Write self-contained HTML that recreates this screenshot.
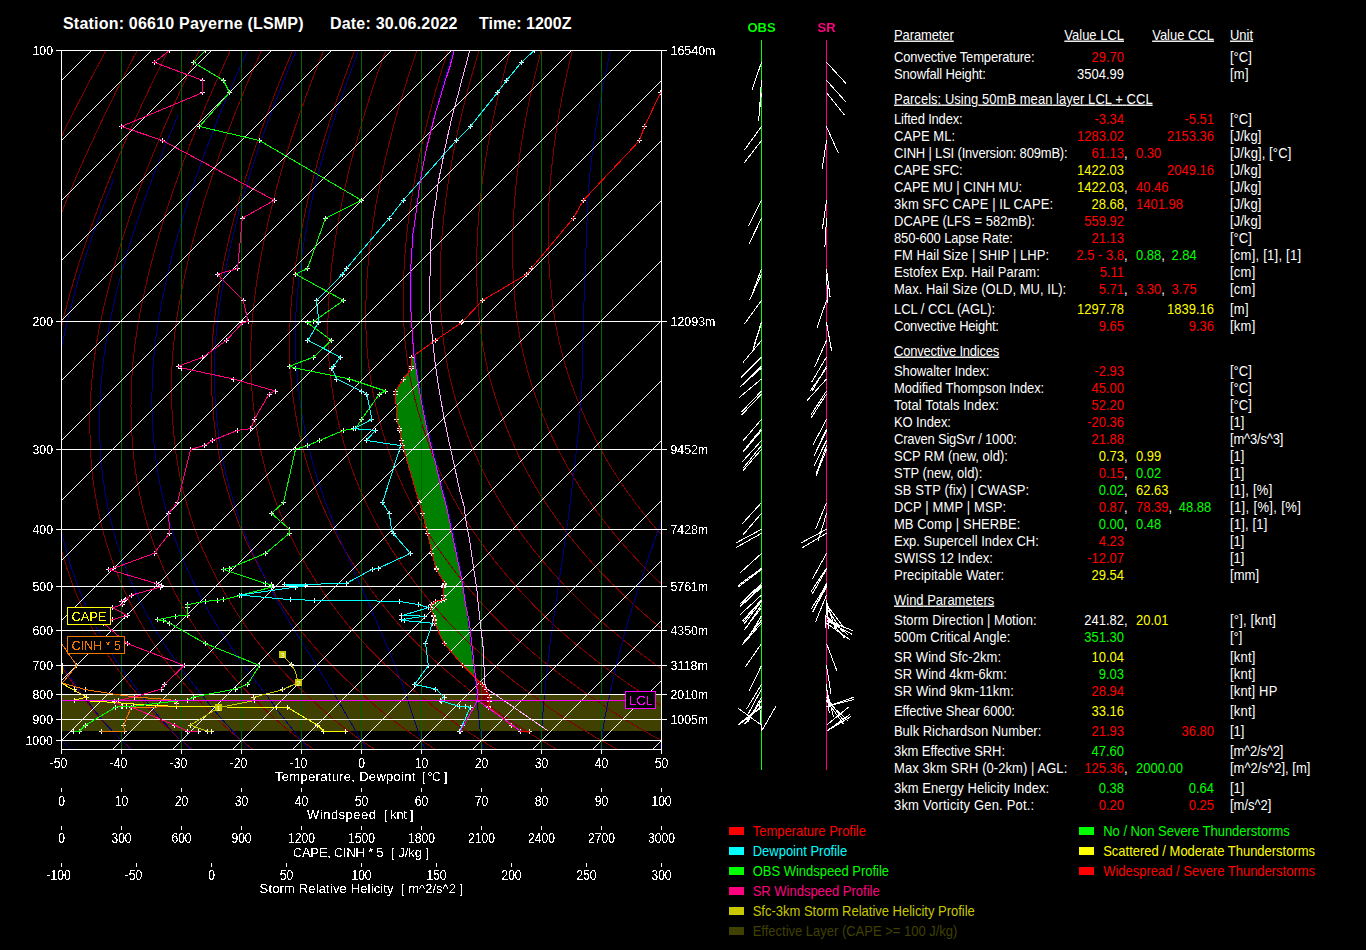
<!DOCTYPE html>
<html lang="en"><head><meta charset="utf-8"><title>Sounding 06610 Payerne</title>
<style>html,body{margin:0;padding:0;background:#000;overflow:hidden}svg{display:block}text{font-family:"Liberation Sans",Arial,sans-serif;font-size:13px;fill:#fff;white-space:pre}</style></head><body>
<svg width="1366" height="950" viewBox="0 0 1366 950">
<rect width="1366" height="950" fill="#000"/>
<g shape-rendering="crispEdges" fill="none" stroke-width="1">
<clipPath id="cp"><rect x="61" y="50" width="601" height="700"/></clipPath>
<g clip-path="url(#cp)">
<rect x="61" y="694" width="600" height="37" fill="#404000" stroke="none"/>
<polygon fill="#008000" stroke="none" points="411.8,357.1 411.8,366.2 411.8,368.0 403.2,379.0 395.6,391.0 395.6,394.0 396.6,419.4 399.6,428.6 399.9,430.4 401.2,440.5 402.3,445.5 403.7,449.3 419.2,502.6 422.6,513.3 426.3,529.3 427.7,533.3 431.9,553.4 436.0,568.2 436.4,569.4 444.7,583.4 444.0,584.9 443.6,585.9 443.6,587.2 443.6,595.0 444.3,599.7 441.0,600.2 435.5,601.3 431.4,604.6 430.3,607.6 433.6,615.6 433.8,616.1 434.8,619.8 434.8,620.6 434.8,623.2 444.1,643.6 462.9,665.5 478.6,681.0 476.0,681.0 475.2,674.3 472.7,652.4 469.3,622.1 465.5,604.1 463.0,586.4 459.7,569.6 455.4,549.4 451.2,528.9 446.2,505.6 440.3,483.7 435.2,461.8 432.3,451.5 428.1,434.7 424.2,416.2 420.5,397.7 418.0,380.8 414.1,357.2 414.1,357.1"/>
<polygon fill="#800000" stroke="none" points="476.0,681.0 476.9,687.7 477.7,700.4 484.0,705.0 488.7,706.6 488.7,706.3 489.5,701.1 489.5,700.4 489.5,697.0 486.2,689.0 482.0,684.4 478.6,681.0"/>
<path stroke="#800000" d="M106.1,50.5 94.6,71.7 84.1,91.6 74.5,110.4 65.6,128.1 57.5,144.8 49.9,160.7 43.0,175.7 36.5,190.1 30.6,203.7 25.0,216.8 19.9,229.2 15.1,241.2 10.6,252.6 6.5,263.6 2.7,274.2 -0.9,284.4 -4.3,294.1 -7.4,303.6 -10.3,312.7 -13.0,321.5 -15.5,330.0 -17.8,338.2 -19.9,346.0 -21.8,353.6 -23.6,361.0 -25.2,368.1 -26.7,375.0 -28.0,381.7 -29.2,388.2 -30.3,394.5 -31.4,400.6 -32.3,406.6 -33.1,412.4 -33.9,418.1 -34.6,423.6 -35.2,429.0 -35.8,434.3 -36.3,439.5 -36.8,444.5 -37.2,449.5 -37.5,454.4 -37.8,459.1 -38.1,463.7 -38.3,468.2 -38.4,472.6 -38.5,477.0 -38.5,481.2 -38.5,485.3 -38.4,489.4 -38.3,493.4 -38.2,497.3 -38.1,501.1 -37.9,504.9 -37.7,508.6 -37.4,512.2 -37.2,515.8 -36.9,519.3 -36.6,522.8 -36.2,526.2 -35.9,529.5 -35.5,532.8 -35.1,536.0 -34.7,539.2 -34.2,542.3 -33.8,545.4 -33.3,548.4 -32.8,551.4 -32.3,554.3 -31.7,557.2 -31.2,560.1 -30.6,562.9 -30.0,565.6 -29.5,568.4 -28.9,571.1 -28.2,573.7 -27.6,576.3 -27.0,578.9 -26.3,581.5 -25.7,584.0 -25.0,586.5 -24.4,589.0 -23.7,591.4 -23.0,593.8 -22.3,596.2 -21.6,598.5 -20.9,600.8 -20.2,603.1 -19.5,605.4 -18.8,607.6 -18.0,609.8 -17.3,612.0 -16.6,614.2 -15.8,616.3 -15.0,618.4 -14.3,620.5 -13.5,622.5 -12.7,624.6 -11.9,626.6 -11.1,628.5 -10.3,630.5 -9.5,632.4 -8.7,634.3 -7.9,636.2 -7.0,638.1 -6.2,640.0 -5.4,641.8 -4.5,643.6 -3.7,645.4 -2.8,647.2 -1.9,648.9 -1.1,650.6 -0.2,652.3 0.6,654.0 1.5,655.7 2.4,657.4 3.3,659.0 4.1,660.7 5.0,662.3 5.9,663.9 6.8,665.5 7.7,667.1 8.6,668.6 9.4,670.2 10.3,671.7 11.2,673.2 12.1,674.7 13.0,676.2 13.9,677.7 14.8,679.2 15.8,680.6 16.7,682.0 17.6,683.5 18.5,684.9 19.4,686.3 20.3,687.7 21.2,689.1 22.1,690.4 23.0,691.8 23.9,693.2 24.8,694.5 25.7,695.8 26.6,697.2 27.5,698.5 28.4,699.8 29.3,701.1 30.2,702.4 31.1,703.7 32.0,705.0 32.9,706.2 33.7,707.5 34.6,708.8 35.5,710.0 36.4,711.2 37.3,712.4 38.2,713.6 39.1,714.8 40.1,716.0 41.0,717.2 41.9,718.4 42.8,719.5 43.7,720.6 44.6,721.8 45.6,722.9 46.5,724.0 47.4,725.1 48.4,726.2 49.3,727.3 50.2,728.3 51.1,729.4 52.1,730.4 53.0,731.5 54.0,732.5 54.9,733.5 55.8,734.6 56.8,735.6 57.7,736.6 58.7,737.6 59.6,738.6 60.6,739.5 61.5,740.5 62.4,741.5 63.4,742.4 64.3,743.4 65.3,744.3 66.2,745.2 67.2,746.2 68.1,747.1 69.1,748.0 70.1,748.9 71.0,749.8 72.0,750.7 72.9,751.6M137.2,50.5 126.1,71.7 116.0,91.6 106.8,110.4 98.4,128.1 90.6,144.8 83.4,160.7 76.8,175.7 70.7,190.1 65.1,203.7 59.9,216.8 55.1,229.2 50.6,241.2 46.5,252.6 42.7,263.6 39.1,274.2 35.8,284.4 32.8,294.1 29.9,303.6 27.3,312.7 24.9,321.5 22.6,330.0 20.6,338.2 18.8,346.0 17.1,353.6 15.6,361.0 14.2,368.1 13.0,375.0 11.9,381.7 10.9,388.2 10.0,394.5 9.2,400.6 8.5,406.6 7.9,412.4 7.4,418.1 6.9,423.6 6.5,429.0 6.1,434.3 5.8,439.5 5.6,444.5 5.3,449.5 5.2,454.4 5.1,459.1 5.1,463.7 5.1,468.2 5.1,472.6 5.3,477.0 5.4,481.2 5.6,485.3 5.8,489.4 6.1,493.4 6.4,497.3 6.7,501.1 7.1,504.9 7.5,508.6 7.9,512.2 8.4,515.8 8.8,519.3 9.3,522.8 9.8,526.2 10.3,529.5 10.8,532.8 11.4,536.0 12.0,539.2 12.6,542.3 13.2,545.4 13.8,548.4 14.5,551.4 15.2,554.3 15.9,557.2 16.6,560.1 17.3,562.9 18.0,565.6 18.8,568.4 19.5,571.1 20.3,573.7 21.0,576.3 21.8,578.9 22.6,581.5 23.4,584.0 24.2,586.5 25.0,589.0 25.8,591.4 26.6,593.8 27.4,596.2 28.3,598.5 29.1,600.8 30.0,603.1 30.8,605.4 31.7,607.6 32.5,609.8 33.4,612.0 34.3,614.2 35.2,616.3 36.1,618.4 37.0,620.5 37.9,622.5 38.8,624.6 39.7,626.6 40.6,628.5 41.5,630.5 42.5,632.4 43.4,634.3 44.4,636.2 45.3,638.1 46.3,640.0 47.2,641.8 48.2,643.6 49.2,645.4 50.1,647.2 51.1,648.9 52.1,650.6 53.1,652.3 54.0,654.0 55.0,655.7 56.0,657.4 57.0,659.0 58.0,660.7 59.0,662.3 60.0,663.9 61.0,665.5 62.0,667.1 63.0,668.6 64.0,670.2 65.0,671.7 66.0,673.2 67.0,674.7 68.0,676.2 69.0,677.7 70.0,679.2 71.0,680.6 72.0,682.0 73.0,683.5 74.1,684.9 75.1,686.3 76.1,687.7 77.1,689.1 78.1,690.4 79.1,691.8 80.1,693.2 81.1,694.5 82.1,695.8 83.1,697.2 84.1,698.5 85.1,699.8 86.1,701.1 87.1,702.4 88.1,703.7 89.0,705.0 90.0,706.2 91.0,707.5 92.0,708.8 93.0,710.0 94.0,711.2 95.0,712.4 96.0,713.6 97.0,714.8 98.0,716.0 99.0,717.2 100.0,718.4 101.0,719.5 102.0,720.6 103.0,721.8 104.1,722.9 105.1,724.0 106.1,725.1 107.1,726.2 108.1,727.3 109.2,728.3 110.2,729.4 111.2,730.4 112.2,731.5 113.3,732.5 114.3,733.5 115.3,734.6 116.3,735.6 117.4,736.6 118.4,737.6 119.4,738.6 120.5,739.5 121.5,740.5 122.5,741.5 123.6,742.4 124.6,743.4 125.6,744.3 126.7,745.2 127.7,746.2 128.7,747.1 129.8,748.0 130.8,748.9 131.8,749.8 132.9,750.7 133.9,751.6M168.3,50.5 157.6,71.7 148.0,91.6 139.2,110.4 131.1,128.1 123.7,144.8 116.9,160.7 110.7,175.7 105.0,190.1 99.7,203.7 94.8,216.8 90.3,229.2 86.2,241.2 82.4,252.6 78.8,263.6 75.6,274.2 72.6,284.4 69.8,294.1 67.3,303.6 64.9,312.7 62.7,321.5 60.8,330.0 59.0,338.2 57.4,346.0 56.0,353.6 54.8,361.0 53.7,368.1 52.7,375.0 51.8,381.7 51.1,388.2 50.4,394.5 49.8,400.6 49.4,406.6 49.0,412.4 48.6,418.1 48.4,423.6 48.2,429.0 48.0,434.3 47.9,439.5 47.9,444.5 47.9,449.5 47.9,454.4 48.0,459.1 48.2,463.7 48.4,468.2 48.7,472.6 49.0,477.0 49.3,481.2 49.7,485.3 50.1,489.4 50.6,493.4 51.0,497.3 51.6,501.1 52.1,504.9 52.7,508.6 53.3,512.2 53.9,515.8 54.5,519.3 55.1,522.8 55.8,526.2 56.5,529.5 57.2,532.8 57.9,536.0 58.6,539.2 59.4,542.3 60.2,545.4 61.0,548.4 61.8,551.4 62.6,554.3 63.5,557.2 64.3,560.1 65.2,562.9 66.1,565.6 67.0,568.4 67.9,571.1 68.8,573.7 69.7,576.3 70.6,578.9 71.5,581.5 72.5,584.0 73.4,586.5 74.3,589.0 75.3,591.4 76.2,593.8 77.2,596.2 78.2,598.5 79.2,600.8 80.1,603.1 81.1,605.4 82.1,607.6 83.1,609.8 84.1,612.0 85.1,614.2 86.1,616.3 87.2,618.4 88.2,620.5 89.2,622.5 90.3,624.6 91.3,626.6 92.3,628.5 93.4,630.5 94.4,632.4 95.5,634.3 96.6,636.2 97.6,638.1 98.7,640.0 99.8,641.8 100.9,643.6 102.0,645.4 103.1,647.2 104.2,648.9 105.2,650.6 106.3,652.3 107.4,654.0 108.5,655.7 109.6,657.4 110.7,659.0 111.8,660.7 113.0,662.3 114.1,663.9 115.2,665.5 116.3,667.1 117.4,668.6 118.5,670.2 119.6,671.7 120.7,673.2 121.8,674.7 122.9,676.2 124.1,677.7 125.2,679.2 126.3,680.6 127.4,682.0 128.5,683.5 129.6,684.9 130.7,686.3 131.9,687.7 133.0,689.1 134.1,690.4 135.2,691.8 136.3,693.2 137.4,694.5 138.5,695.8 139.6,697.2 140.7,698.5 141.8,699.8 142.9,701.1 144.0,702.4 145.0,703.7 146.1,705.0 147.2,706.2 148.3,707.5 149.4,708.8 150.5,710.0 151.6,711.2 152.7,712.4 153.7,713.6 154.8,714.8 155.9,716.0 157.0,717.2 158.1,718.4 159.2,719.5 160.3,720.6 161.5,721.8 162.6,722.9 163.7,724.0 164.8,725.1 165.9,726.2 167.0,727.3 168.1,728.3 169.2,729.4 170.3,730.4 171.5,731.5 172.6,732.5 173.7,733.5 174.8,734.6 175.9,735.6 177.0,736.6 178.1,737.6 179.3,738.6 180.4,739.5 181.5,740.5 182.6,741.5 183.7,742.4 184.9,743.4 186.0,744.3 187.1,745.2 188.2,746.2 189.3,747.1 190.5,748.0 191.6,748.9 192.7,749.8 193.8,750.7 194.9,751.6M199.3,50.5 189.2,71.7 179.9,91.6 171.5,110.4 163.8,128.1 156.8,144.8 150.4,160.7 144.5,175.7 139.2,190.1 134.2,203.7 129.7,216.8 125.5,229.2 121.7,241.2 118.2,252.6 115.0,263.6 112.0,274.2 109.3,284.4 106.9,294.1 104.6,303.6 102.5,312.7 100.6,321.5 98.9,330.0 97.4,338.2 96.1,346.0 95.0,353.6 94.0,361.0 93.1,368.1 92.4,375.0 91.7,381.7 91.2,388.2 90.8,394.5 90.5,400.6 90.2,406.6 90.0,412.4 89.9,418.1 89.9,423.6 89.9,429.0 90.0,434.3 90.1,439.5 90.2,444.5 90.4,449.5 90.7,454.4 91.0,459.1 91.3,463.7 91.7,468.2 92.2,472.6 92.7,477.0 93.2,481.2 93.8,485.3 94.4,489.4 95.0,493.4 95.7,497.3 96.4,501.1 97.1,504.9 97.8,508.6 98.6,512.2 99.4,515.8 100.2,519.3 101.0,522.8 101.8,526.2 102.7,529.5 103.5,532.8 104.4,536.0 105.3,539.2 106.2,542.3 107.2,545.4 108.1,548.4 109.1,551.4 110.1,554.3 111.1,557.2 112.1,560.1 113.1,562.9 114.1,565.6 115.2,568.4 116.2,571.1 117.3,573.7 118.3,576.3 119.4,578.9 120.5,581.5 121.5,584.0 122.6,586.5 123.7,589.0 124.8,591.4 125.9,593.8 127.0,596.2 128.1,598.5 129.2,600.8 130.3,603.1 131.4,605.4 132.6,607.6 133.7,609.8 134.8,612.0 136.0,614.2 137.1,616.3 138.3,618.4 139.4,620.5 140.6,622.5 141.7,624.6 142.9,626.6 144.1,628.5 145.2,630.5 146.4,632.4 147.6,634.3 148.8,636.2 150.0,638.1 151.2,640.0 152.4,641.8 153.6,643.6 154.8,645.4 156.0,647.2 157.2,648.9 158.4,650.6 159.6,652.3 160.8,654.0 162.1,655.7 163.3,657.4 164.5,659.0 165.7,660.7 166.9,662.3 168.1,663.9 169.3,665.5 170.6,667.1 171.8,668.6 173.0,670.2 174.2,671.7 175.4,673.2 176.7,674.7 177.9,676.2 179.1,677.7 180.3,679.2 181.5,680.6 182.8,682.0 184.0,683.5 185.2,684.9 186.4,686.3 187.6,687.7 188.9,689.1 190.1,690.4 191.3,691.8 192.5,693.2 193.7,694.5 194.9,695.8 196.1,697.2 197.3,698.5 198.5,699.8 199.7,701.1 200.8,702.4 202.0,703.7 203.2,705.0 204.4,706.2 205.6,707.5 206.8,708.8 207.9,710.0 209.1,711.2 210.3,712.4 211.5,713.6 212.7,714.8 213.9,716.0 215.1,717.2 216.3,718.4 217.5,719.5 218.7,720.6 219.9,721.8 221.1,722.9 222.3,724.0 223.5,725.1 224.7,726.2 225.9,727.3 227.1,728.3 228.3,729.4 229.5,730.4 230.7,731.5 231.9,732.5 233.1,733.5 234.3,734.6 235.5,735.6 236.7,736.6 237.9,737.6 239.1,738.6 240.3,739.5 241.5,740.5 242.7,741.5 243.9,742.4 245.1,743.4 246.3,744.3 247.5,745.2 248.7,746.2 249.9,747.1 251.1,748.0 252.3,748.9 253.5,749.8 254.7,750.7 255.9,751.6M230.4,50.5 220.7,71.7 211.9,91.6 203.8,110.4 196.6,128.1 189.9,144.8 183.9,160.7 178.4,175.7 173.4,190.1 168.8,203.7 164.6,216.8 160.8,229.2 157.3,241.2 154.1,252.6 151.2,263.6 148.5,274.2 146.1,284.4 143.9,294.1 141.9,303.6 140.1,312.7 138.5,321.5 137.1,330.0 135.9,338.2 134.8,346.0 133.9,353.6 133.1,361.0 132.5,368.1 132.0,375.0 131.6,381.7 131.4,388.2 131.2,394.5 131.1,400.6 131.0,406.6 131.1,412.4 131.2,418.1 131.4,423.6 131.6,429.0 131.9,434.3 132.2,439.5 132.6,444.5 133.0,449.5 133.4,454.4 133.9,459.1 134.5,463.7 135.1,468.2 135.7,472.6 136.4,477.0 137.1,481.2 137.9,485.3 138.7,489.4 139.5,493.4 140.3,497.3 141.2,501.1 142.1,504.9 143.0,508.6 143.9,512.2 144.9,515.8 145.8,519.3 146.8,522.8 147.8,526.2 148.8,529.5 149.9,532.8 150.9,536.0 152.0,539.2 153.1,542.3 154.2,545.4 155.3,548.4 156.4,551.4 157.5,554.3 158.7,557.2 159.9,560.1 161.0,562.9 162.2,565.6 163.4,568.4 164.6,571.1 165.8,573.7 167.0,576.3 168.2,578.9 169.4,581.5 170.6,584.0 171.8,586.5 173.1,589.0 174.3,591.4 175.5,593.8 176.8,596.2 178.0,598.5 179.2,600.8 180.5,603.1 181.8,605.4 183.0,607.6 184.3,609.8 185.5,612.0 186.8,614.2 188.1,616.3 189.4,618.4 190.6,620.5 191.9,622.5 193.2,624.6 194.5,626.6 195.8,628.5 197.1,630.5 198.4,632.4 199.7,634.3 201.0,636.2 202.3,638.1 203.6,640.0 205.0,641.8 206.3,643.6 207.6,645.4 208.9,647.2 210.3,648.9 211.6,650.6 212.9,652.3 214.2,654.0 215.6,655.7 216.9,657.4 218.2,659.0 219.6,660.7 220.9,662.3 222.2,663.9 223.5,665.5 224.9,667.1 226.2,668.6 227.5,670.2 228.8,671.7 230.2,673.2 231.5,674.7 232.8,676.2 234.2,677.7 235.5,679.2 236.8,680.6 238.1,682.0 239.5,683.5 240.8,684.9 242.1,686.3 243.4,687.7 244.7,689.1 246.1,690.4 247.4,691.8 248.7,693.2 250.0,694.5 251.3,695.8 252.6,697.2 253.9,698.5 255.2,699.8 256.5,701.1 257.7,702.4 259.0,703.7 260.3,705.0 261.6,706.2 262.9,707.5 264.1,708.8 265.4,710.0 266.7,711.2 268.0,712.4 269.3,713.6 270.5,714.8 271.8,716.0 273.1,717.2 274.4,718.4 275.7,719.5 277.0,720.6 278.3,721.8 279.6,722.9 280.8,724.0 282.1,725.1 283.4,726.2 284.7,727.3 286.0,728.3 287.3,729.4 288.6,730.4 289.9,731.5 291.2,732.5 292.5,733.5 293.8,734.6 295.0,735.6 296.3,736.6 297.6,737.6 298.9,738.6 300.2,739.5 301.5,740.5 302.8,741.5 304.1,742.4 305.4,743.4 306.7,744.3 307.9,745.2 309.2,746.2 310.5,747.1 311.8,748.0 313.1,748.9 314.4,749.8 315.7,750.7 316.9,751.6M261.5,50.5 252.2,71.7 243.8,91.6 236.2,110.4 229.3,128.1 223.1,144.8 217.4,160.7 212.3,175.7 207.6,190.1 203.3,203.7 199.5,216.8 196.0,229.2 192.8,241.2 189.9,252.6 187.3,263.6 185.0,274.2 182.9,284.4 181.0,294.1 179.3,303.6 177.7,312.7 176.4,321.5 175.2,330.0 174.3,338.2 173.5,346.0 172.8,353.6 172.3,361.0 171.9,368.1 171.7,375.0 171.5,381.7 171.5,388.2 171.5,394.5 171.7,400.6 171.9,406.6 172.1,412.4 172.5,418.1 172.9,423.6 173.3,429.0 173.8,434.3 174.3,439.5 174.9,444.5 175.5,449.5 176.1,454.4 176.8,459.1 177.6,463.7 178.4,468.2 179.2,472.6 180.1,477.0 181.0,481.2 181.9,485.3 182.9,489.4 183.9,493.4 184.9,497.3 186.0,501.1 187.1,504.9 188.2,508.6 189.3,512.2 190.4,515.8 191.5,519.3 192.7,522.8 193.8,526.2 195.0,529.5 196.2,532.8 197.4,536.0 198.7,539.2 199.9,542.3 201.2,545.4 202.4,548.4 203.7,551.4 205.0,554.3 206.3,557.2 207.6,560.1 208.9,562.9 210.3,565.6 211.6,568.4 212.9,571.1 214.3,573.7 215.6,576.3 217.0,578.9 218.3,581.5 219.7,584.0 221.1,586.5 222.4,589.0 223.8,591.4 225.2,593.8 226.5,596.2 227.9,598.5 229.3,600.8 230.7,603.1 232.1,605.4 233.5,607.6 234.8,609.8 236.2,612.0 237.6,614.2 239.0,616.3 240.5,618.4 241.9,620.5 243.3,622.5 244.7,624.6 246.1,626.6 247.5,628.5 248.9,630.5 250.4,632.4 251.8,634.3 253.2,636.2 254.7,638.1 256.1,640.0 257.5,641.8 259.0,643.6 260.4,645.4 261.9,647.2 263.3,648.9 264.8,650.6 266.2,652.3 267.6,654.0 269.1,655.7 270.5,657.4 272.0,659.0 273.4,660.7 274.8,662.3 276.3,663.9 277.7,665.5 279.2,667.1 280.6,668.6 282.0,670.2 283.5,671.7 284.9,673.2 286.3,674.7 287.8,676.2 289.2,677.7 290.6,679.2 292.1,680.6 293.5,682.0 294.9,683.5 296.4,684.9 297.8,686.3 299.2,687.7 300.6,689.1 302.0,690.4 303.5,691.8 304.9,693.2 306.3,694.5 307.7,695.8 309.1,697.2 310.5,698.5 311.9,699.8 313.2,701.1 314.6,702.4 316.0,703.7 317.4,705.0 318.8,706.2 320.1,707.5 321.5,708.8 322.9,710.0 324.3,711.2 325.6,712.4 327.0,713.6 328.4,714.8 329.8,716.0 331.1,717.2 332.5,718.4 333.9,719.5 335.3,720.6 336.7,721.8 338.0,722.9 339.4,724.0 340.8,725.1 342.2,726.2 343.6,727.3 345.0,728.3 346.3,729.4 347.7,730.4 349.1,731.5 350.5,732.5 351.9,733.5 353.2,734.6 354.6,735.6 356.0,736.6 357.4,737.6 358.7,738.6 360.1,739.5 361.5,740.5 362.9,741.5 364.2,742.4 365.6,743.4 367.0,744.3 368.4,745.2 369.7,746.2 371.1,747.1 372.5,748.0 373.8,748.9 375.2,749.8 376.6,750.7 377.9,751.6M292.6,50.5 283.7,71.7 275.7,91.6 268.5,110.4 262.1,128.1 256.2,144.8 250.9,160.7 246.1,175.7 241.8,190.1 237.9,203.7 234.4,216.8 231.2,229.2 228.4,241.2 225.8,252.6 223.5,263.6 221.4,274.2 219.6,284.4 218.0,294.1 216.6,303.6 215.4,312.7 214.3,321.5 213.4,330.0 212.7,338.2 212.1,346.0 211.8,353.6 211.5,361.0 211.4,368.1 211.4,375.0 211.5,381.7 211.6,388.2 211.9,394.5 212.3,400.6 212.7,406.6 213.2,412.4 213.7,418.1 214.4,423.6 215.0,429.0 215.7,434.3 216.4,439.5 217.2,444.5 218.0,449.5 218.9,454.4 219.8,459.1 220.7,463.7 221.7,468.2 222.7,472.6 223.8,477.0 224.9,481.2 226.0,485.3 227.2,489.4 228.4,493.4 229.6,497.3 230.8,501.1 232.1,504.9 233.3,508.6 234.6,512.2 235.9,515.8 237.2,519.3 238.5,522.8 239.9,526.2 241.2,529.5 242.6,532.8 243.9,536.0 245.3,539.2 246.7,542.3 248.1,545.4 249.6,548.4 251.0,551.4 252.5,554.3 253.9,557.2 255.4,560.1 256.8,562.9 258.3,565.6 259.8,568.4 261.3,571.1 262.8,573.7 264.3,576.3 265.8,578.9 267.3,581.5 268.8,584.0 270.3,586.5 271.8,589.0 273.3,591.4 274.8,593.8 276.3,596.2 277.8,598.5 279.3,600.8 280.9,603.1 282.4,605.4 283.9,607.6 285.4,609.8 287.0,612.0 288.5,614.2 290.0,616.3 291.6,618.4 293.1,620.5 294.6,622.5 296.2,624.6 297.7,626.6 299.3,628.5 300.8,630.5 302.4,632.4 303.9,634.3 305.5,636.2 307.0,638.1 308.6,640.0 310.1,641.8 311.7,643.6 313.2,645.4 314.8,647.2 316.4,648.9 317.9,650.6 319.5,652.3 321.0,654.0 322.6,655.7 324.2,657.4 325.7,659.0 327.3,660.7 328.8,662.3 330.4,663.9 331.9,665.5 333.5,667.1 335.0,668.6 336.5,670.2 338.1,671.7 339.6,673.2 341.2,674.7 342.7,676.2 344.3,677.7 345.8,679.2 347.3,680.6 348.9,682.0 350.4,683.5 351.9,684.9 353.5,686.3 355.0,687.7 356.5,689.1 358.0,690.4 359.6,691.8 361.1,693.2 362.6,694.5 364.1,695.8 365.6,697.2 367.1,698.5 368.6,699.8 370.0,701.1 371.5,702.4 373.0,703.7 374.5,705.0 375.9,706.2 377.4,707.5 378.9,708.8 380.4,710.0 381.8,711.2 383.3,712.4 384.8,713.6 386.2,714.8 387.7,716.0 389.2,717.2 390.6,718.4 392.1,719.5 393.6,720.6 395.1,721.8 396.5,722.9 398.0,724.0 399.5,725.1 401.0,726.2 402.4,727.3 403.9,728.3 405.4,729.4 406.8,730.4 408.3,731.5 409.8,732.5 411.3,733.5 412.7,734.6 414.2,735.6 415.6,736.6 417.1,737.6 418.6,738.6 420.0,739.5 421.5,740.5 423.0,741.5 424.4,742.4 425.9,743.4 427.3,744.3 428.8,745.2 430.2,746.2 431.7,747.1 433.2,748.0 434.6,748.9 436.1,749.8 437.5,750.7 439.0,751.6M323.6,50.5 315.2,71.7 307.7,91.6 300.9,110.4 294.8,128.1 289.3,144.8 284.4,160.7 280.0,175.7 276.0,190.1 272.5,203.7 269.3,216.8 266.4,229.2 263.9,241.2 261.7,252.6 259.7,263.6 257.9,274.2 256.4,284.4 255.1,294.1 253.9,303.6 253.0,312.7 252.2,321.5 251.5,330.0 251.1,338.2 250.8,346.0 250.7,353.6 250.7,361.0 250.8,368.1 251.0,375.0 251.4,381.7 251.8,388.2 252.3,394.5 252.9,400.6 253.5,406.6 254.2,412.4 255.0,418.1 255.8,423.6 256.7,429.0 257.6,434.3 258.6,439.5 259.6,444.5 260.6,449.5 261.6,454.4 262.7,459.1 263.9,463.7 265.0,468.2 266.3,472.6 267.5,477.0 268.8,481.2 270.1,485.3 271.5,489.4 272.8,493.4 274.2,497.3 275.6,501.1 277.0,504.9 278.5,508.6 279.9,512.2 281.4,515.8 282.9,519.3 284.4,522.8 285.9,526.2 287.4,529.5 288.9,532.8 290.4,536.0 292.0,539.2 293.6,542.3 295.1,545.4 296.7,548.4 298.3,551.4 299.9,554.3 301.5,557.2 303.1,560.1 304.8,562.9 306.4,565.6 308.0,568.4 309.7,571.1 311.3,573.7 312.9,576.3 314.6,578.9 316.2,581.5 317.9,584.0 319.5,586.5 321.1,589.0 322.8,591.4 324.4,593.8 326.1,596.2 327.7,598.5 329.4,600.8 331.0,603.1 332.7,605.4 334.4,607.6 336.0,609.8 337.7,612.0 339.3,614.2 341.0,616.3 342.7,618.4 344.3,620.5 346.0,622.5 347.6,624.6 349.3,626.6 351.0,628.5 352.7,630.5 354.3,632.4 356.0,634.3 357.7,636.2 359.4,638.1 361.0,640.0 362.7,641.8 364.4,643.6 366.1,645.4 367.7,647.2 369.4,648.9 371.1,650.6 372.8,652.3 374.4,654.0 376.1,655.7 377.8,657.4 379.4,659.0 381.1,660.7 382.8,662.3 384.4,663.9 386.1,665.5 387.8,667.1 389.4,668.6 391.1,670.2 392.7,671.7 394.4,673.2 396.0,674.7 397.7,676.2 399.3,677.7 401.0,679.2 402.6,680.6 404.3,682.0 405.9,683.5 407.5,684.9 409.2,686.3 410.8,687.7 412.4,689.1 414.0,690.4 415.6,691.8 417.3,693.2 418.9,694.5 420.5,695.8 422.1,697.2 423.7,698.5 425.2,699.8 426.8,701.1 428.4,702.4 430.0,703.7 431.6,705.0 433.1,706.2 434.7,707.5 436.3,708.8 437.8,710.0 439.4,711.2 441.0,712.4 442.5,713.6 444.1,714.8 445.6,716.0 447.2,717.2 448.8,718.4 450.3,719.5 451.9,720.6 453.5,721.8 455.0,722.9 456.6,724.0 458.2,725.1 459.7,726.2 461.3,727.3 462.9,728.3 464.4,729.4 466.0,730.4 467.5,731.5 469.1,732.5 470.6,733.5 472.2,734.6 473.8,735.6 475.3,736.6 476.9,737.6 478.4,738.6 480.0,739.5 481.5,740.5 483.0,741.5 484.6,742.4 486.1,743.4 487.7,744.3 489.2,745.2 490.8,746.2 492.3,747.1 493.8,748.0 495.4,748.9 496.9,749.8 498.4,750.7 500.0,751.6M354.7,50.5 346.7,71.7 339.6,91.6 333.2,110.4 327.5,128.1 322.4,144.8 317.9,160.7 313.8,175.7 310.2,190.1 307.0,203.7 304.2,216.8 301.7,229.2 299.4,241.2 297.5,252.6 295.8,263.6 294.4,274.2 293.1,284.4 292.1,294.1 291.3,303.6 290.6,312.7 290.1,321.5 289.7,330.0 289.5,338.2 289.5,346.0 289.6,353.6 289.9,361.0 290.2,368.1 290.7,375.0 291.3,381.7 291.9,388.2 292.7,394.5 293.5,400.6 294.4,406.6 295.3,412.4 296.3,418.1 297.3,423.6 298.4,429.0 299.5,434.3 300.7,439.5 301.9,444.5 303.1,449.5 304.4,454.4 305.7,459.1 307.0,463.7 308.4,468.2 309.8,472.6 311.2,477.0 312.7,481.2 314.2,485.3 315.7,489.4 317.3,493.4 318.8,497.3 320.4,501.1 322.0,504.9 323.6,508.6 325.3,512.2 326.9,515.8 328.6,519.3 330.2,522.8 331.9,526.2 333.6,529.5 335.3,532.8 336.9,536.0 338.7,539.2 340.4,542.3 342.1,545.4 343.9,548.4 345.6,551.4 347.4,554.3 349.1,557.2 350.9,560.1 352.7,562.9 354.4,565.6 356.2,568.4 358.0,571.1 359.8,573.7 361.6,576.3 363.4,578.9 365.2,581.5 366.9,584.0 368.7,586.5 370.5,589.0 372.3,591.4 374.1,593.8 375.9,596.2 377.6,598.5 379.4,600.8 381.2,603.1 383.0,605.4 384.8,607.6 386.6,609.8 388.4,612.0 390.2,614.2 392.0,616.3 393.7,618.4 395.5,620.5 397.3,622.5 399.1,624.6 400.9,626.6 402.7,628.5 404.5,630.5 406.3,632.4 408.1,634.3 409.9,636.2 411.7,638.1 413.5,640.0 415.3,641.8 417.1,643.6 418.9,645.4 420.7,647.2 422.5,648.9 424.3,650.6 426.0,652.3 427.8,654.0 429.6,655.7 431.4,657.4 433.2,659.0 435.0,660.7 436.7,662.3 438.5,663.9 440.3,665.5 442.0,667.1 443.8,668.6 445.6,670.2 447.3,671.7 449.1,673.2 450.9,674.7 452.6,676.2 454.4,677.7 456.1,679.2 457.9,680.6 459.6,682.0 461.4,683.5 463.1,684.9 464.8,686.3 466.6,687.7 468.3,689.1 470.0,690.4 471.7,691.8 473.5,693.2 475.2,694.5 476.9,695.8 478.6,697.2 480.3,698.5 481.9,699.8 483.6,701.1 485.3,702.4 487.0,703.7 488.6,705.0 490.3,706.2 492.0,707.5 493.6,708.8 495.3,710.0 497.0,711.2 498.6,712.4 500.3,713.6 501.9,714.8 503.6,716.0 505.2,717.2 506.9,718.4 508.6,719.5 510.2,720.6 511.9,721.8 513.5,722.9 515.2,724.0 516.8,725.1 518.5,726.2 520.2,727.3 521.8,728.3 523.5,729.4 525.1,730.4 526.7,731.5 528.4,732.5 530.0,733.5 531.7,734.6 533.3,735.6 535.0,736.6 536.6,737.6 538.2,738.6 539.9,739.5 541.5,740.5 543.1,741.5 544.8,742.4 546.4,743.4 548.0,744.3 549.6,745.2 551.3,746.2 552.9,747.1 554.5,748.0 556.1,748.9 557.7,749.8 559.4,750.7 561.0,751.6M385.8,50.5 378.2,71.7 371.5,91.6 365.6,110.4 360.3,128.1 355.6,144.8 351.4,160.7 347.7,175.7 344.4,190.1 341.6,203.7 339.1,216.8 336.9,229.2 335.0,241.2 333.4,252.6 332.0,263.6 330.8,274.2 329.9,284.4 329.2,294.1 328.6,303.6 328.2,312.7 327.9,321.5 327.8,330.0 327.9,338.2 328.2,346.0 328.5,353.6 329.0,361.0 329.7,368.1 330.4,375.0 331.2,381.7 332.1,388.2 333.1,394.5 334.1,400.6 335.2,406.6 336.4,412.4 337.6,418.1 338.8,423.6 340.1,429.0 341.5,434.3 342.8,439.5 344.2,444.5 345.6,449.5 347.1,454.4 348.6,459.1 350.1,463.7 351.7,468.2 353.3,472.6 354.9,477.0 356.6,481.2 358.3,485.3 360.0,489.4 361.7,493.4 363.5,497.3 365.2,501.1 367.0,504.9 368.8,508.6 370.6,512.2 372.4,515.8 374.2,519.3 376.1,522.8 377.9,526.2 379.7,529.5 381.6,532.8 383.5,536.0 385.3,539.2 387.2,542.3 389.1,545.4 391.0,548.4 392.9,551.4 394.8,554.3 396.7,557.2 398.7,560.1 400.6,562.9 402.5,565.6 404.4,568.4 406.4,571.1 408.3,573.7 410.2,576.3 412.2,578.9 414.1,581.5 416.0,584.0 417.9,586.5 419.9,589.0 421.8,591.4 423.7,593.8 425.6,596.2 427.6,598.5 429.5,600.8 431.4,603.1 433.3,605.4 435.2,607.6 437.2,609.8 439.1,612.0 441.0,614.2 442.9,616.3 444.8,618.4 446.8,620.5 448.7,622.5 450.6,624.6 452.5,626.6 454.4,628.5 456.4,630.5 458.3,632.4 460.2,634.3 462.1,636.2 464.0,638.1 465.9,640.0 467.9,641.8 469.8,643.6 471.7,645.4 473.6,647.2 475.5,648.9 477.4,650.6 479.3,652.3 481.2,654.0 483.1,655.7 485.0,657.4 486.9,659.0 488.8,660.7 490.7,662.3 492.6,663.9 494.5,665.5 496.3,667.1 498.2,668.6 500.1,670.2 502.0,671.7 503.8,673.2 505.7,674.7 507.6,676.2 509.4,677.7 511.3,679.2 513.1,680.6 515.0,682.0 516.8,683.5 518.7,684.9 520.5,686.3 522.4,687.7 524.2,689.1 526.0,690.4 527.8,691.8 529.6,693.2 531.5,694.5 533.3,695.8 535.1,697.2 536.8,698.5 538.6,699.8 540.4,701.1 542.2,702.4 544.0,703.7 545.7,705.0 547.5,706.2 549.2,707.5 551.0,708.8 552.8,710.0 554.5,711.2 556.3,712.4 558.0,713.6 559.8,714.8 561.5,716.0 563.3,717.2 565.0,718.4 566.8,719.5 568.5,720.6 570.3,721.8 572.0,722.9 573.8,724.0 575.5,725.1 577.3,726.2 579.0,727.3 580.8,728.3 582.5,729.4 584.2,730.4 586.0,731.5 587.7,732.5 589.4,733.5 591.2,734.6 592.9,735.6 594.6,736.6 596.3,737.6 598.1,738.6 599.8,739.5 601.5,740.5 603.2,741.5 604.9,742.4 606.6,743.4 608.4,744.3 610.1,745.2 611.8,746.2 613.5,747.1 615.2,748.0 616.9,748.9 618.6,749.8 620.3,750.7 622.0,751.6M416.9,50.5 409.8,71.7 403.5,91.6 397.9,110.4 393.0,128.1 388.7,144.8 384.9,160.7 381.6,175.7 378.7,190.1 376.1,203.7 374.0,216.8 372.1,229.2 370.5,241.2 369.2,252.6 368.2,263.6 367.3,274.2 366.7,284.4 366.2,294.1 365.9,303.6 365.8,312.7 365.8,321.5 366.0,330.0 366.3,338.2 366.8,346.0 367.5,353.6 368.2,361.0 369.1,368.1 370.0,375.0 371.1,381.7 372.2,388.2 373.4,394.5 374.7,400.6 376.0,406.6 377.4,412.4 378.8,418.1 380.3,423.6 381.8,429.0 383.4,434.3 385.0,439.5 386.6,444.5 388.2,449.5 389.8,454.4 391.5,459.1 393.3,463.7 395.0,468.2 396.8,472.6 398.7,477.0 400.5,481.2 402.4,485.3 404.3,489.4 406.2,493.4 408.1,497.3 410.0,501.1 412.0,504.9 414.0,508.6 415.9,512.2 417.9,515.8 419.9,519.3 421.9,522.8 423.9,526.2 425.9,529.5 427.9,532.8 430.0,536.0 432.0,539.2 434.0,542.3 436.1,545.4 438.1,548.4 440.2,551.4 442.3,554.3 444.3,557.2 446.4,560.1 448.5,562.9 450.6,565.6 452.7,568.4 454.7,571.1 456.8,573.7 458.9,576.3 461.0,578.9 463.0,581.5 465.1,584.0 467.2,586.5 469.2,589.0 471.3,591.4 473.4,593.8 475.4,596.2 477.5,598.5 479.5,600.8 481.6,603.1 483.6,605.4 485.7,607.6 487.7,609.8 489.8,612.0 491.8,614.2 493.9,616.3 495.9,618.4 498.0,620.5 500.0,622.5 502.1,624.6 504.1,626.6 506.2,628.5 508.2,630.5 510.3,632.4 512.3,634.3 514.3,636.2 516.4,638.1 518.4,640.0 520.4,641.8 522.5,643.6 524.5,645.4 526.5,647.2 528.6,648.9 530.6,650.6 532.6,652.3 534.6,654.0 536.6,655.7 538.7,657.4 540.7,659.0 542.7,660.7 544.7,662.3 546.7,663.9 548.7,665.5 550.6,667.1 552.6,668.6 554.6,670.2 556.6,671.7 558.6,673.2 560.5,674.7 562.5,676.2 564.5,677.7 566.4,679.2 568.4,680.6 570.4,682.0 572.3,683.5 574.3,684.9 576.2,686.3 578.1,687.7 580.1,689.1 582.0,690.4 583.9,691.8 585.8,693.2 587.7,694.5 589.7,695.8 591.5,697.2 593.4,698.5 595.3,699.8 597.2,701.1 599.1,702.4 600.9,703.7 602.8,705.0 604.7,706.2 606.5,707.5 608.4,708.8 610.2,710.0 612.1,711.2 613.9,712.4 615.8,713.6 617.6,714.8 619.5,716.0 621.3,717.2 623.2,718.4 625.0,719.5 626.8,720.6 628.7,721.8 630.5,722.9 632.4,724.0 634.2,725.1 636.0,726.2 637.9,727.3 639.7,728.3 641.5,729.4 643.4,730.4 645.2,731.5 647.0,732.5 648.8,733.5 650.6,734.6 652.5,735.6 654.3,736.6 656.1,737.6 657.9,738.6 659.7,739.5 661.5,740.5 663.3,741.5 665.1,742.4 666.9,743.4 668.7,744.3 670.5,745.2 672.3,746.2 674.1,747.1 675.9,748.0 677.6,748.9 679.4,749.8 681.2,750.7 683.0,751.6M448.0,50.5 441.3,71.7 435.4,91.6 430.3,110.4 425.7,128.1 421.8,144.8 418.4,160.7 415.4,175.7 412.9,190.1 410.7,203.7 408.9,216.8 407.3,229.2 406.1,241.2 405.1,252.6 404.3,263.6 403.8,274.2 403.4,284.4 403.3,294.1 403.3,303.6 403.4,312.7 403.7,321.5 404.2,330.0 404.8,338.2 405.5,346.0 406.4,353.6 407.4,361.0 408.5,368.1 409.7,375.0 411.0,381.7 412.4,388.2 413.8,394.5 415.3,400.6 416.9,406.6 418.5,412.4 420.1,418.1 421.8,423.6 423.5,429.0 425.3,434.3 427.1,439.5 428.9,444.5 430.7,449.5 432.6,454.4 434.5,459.1 436.4,463.7 438.4,468.2 440.3,472.6 442.4,477.0 444.4,481.2 446.5,485.3 448.5,489.4 450.6,493.4 452.7,497.3 454.9,501.1 457.0,504.9 459.1,508.6 461.3,512.2 463.4,515.8 465.6,519.3 467.8,522.8 469.9,526.2 472.1,529.5 474.3,532.8 476.5,536.0 478.7,539.2 480.9,542.3 483.1,545.4 485.3,548.4 487.5,551.4 489.7,554.3 492.0,557.2 494.2,560.1 496.4,562.9 498.6,565.6 500.9,568.4 503.1,571.1 505.3,573.7 507.5,576.3 509.7,578.9 512.0,581.5 514.2,584.0 516.4,586.5 518.6,589.0 520.8,591.4 523.0,593.8 525.2,596.2 527.4,598.5 529.6,600.8 531.8,603.1 534.0,605.4 536.1,607.6 538.3,609.8 540.5,612.0 542.7,614.2 544.9,616.3 547.0,618.4 549.2,620.5 551.4,622.5 553.6,624.6 555.7,626.6 557.9,628.5 560.1,630.5 562.2,632.4 564.4,634.3 566.6,636.2 568.7,638.1 570.9,640.0 573.0,641.8 575.2,643.6 577.3,645.4 579.5,647.2 581.6,648.9 583.8,650.6 585.9,652.3 588.0,654.0 590.2,655.7 592.3,657.4 594.4,659.0 596.5,660.7 598.6,662.3 600.7,663.9 602.8,665.5 604.9,667.1 607.0,668.6 609.1,670.2 611.2,671.7 613.3,673.2 615.4,674.7 617.5,676.2 619.5,677.7 621.6,679.2 623.7,680.6 625.7,682.0 627.8,683.5 629.8,684.9 631.9,686.3 633.9,687.7 636.0,689.1 638.0,690.4 640.0,691.8 642.0,693.2 644.0,694.5 646.0,695.8 648.0,697.2 650.0,698.5 652.0,699.8 654.0,701.1 656.0,702.4 657.9,703.7 659.9,705.0 661.9,706.2 663.8,707.5 665.8,708.8 667.7,710.0 669.6,711.2 671.6,712.4 673.5,713.6 675.5,714.8 677.4,716.0 679.4,717.2 681.3,718.4 683.2,719.5 685.2,720.6 687.1,721.8 689.0,722.9 691.0,724.0 692.9,725.1 694.8,726.2 696.7,727.3 698.7,728.3 700.6,729.4 702.5,730.4 704.4,731.5 706.3,732.5 708.2,733.5 710.1,734.6 712.0,735.6 713.9,736.6 715.8,737.6 717.7,738.6 719.6,739.5 721.5,740.5 723.4,741.5 725.3,742.4 727.2,743.4 729.0,744.3 730.9,745.2 732.8,746.2 734.7,747.1 736.5,748.0 738.4,748.9 740.3,749.8 742.1,750.7 744.0,751.6M479.0,50.5 472.8,71.7 467.3,91.6 462.6,110.4 458.5,128.1 454.9,144.8 451.9,160.7 449.3,175.7 447.1,190.1 445.3,203.7 443.8,216.8 442.6,229.2 441.6,241.2 440.9,252.6 440.5,263.6 440.2,274.2 440.2,284.4 440.3,294.1 440.6,303.6 441.0,312.7 441.6,321.5 442.3,330.0 443.2,338.2 444.2,346.0 445.3,353.6 446.6,361.0 447.9,368.1 449.4,375.0 450.9,381.7 452.5,388.2 454.2,394.5 455.9,400.6 457.7,406.6 459.5,412.4 461.4,418.1 463.3,423.6 465.2,429.0 467.2,434.3 469.2,439.5 471.2,444.5 473.3,449.5 475.3,454.4 477.4,459.1 479.5,463.7 481.7,468.2 483.9,472.6 486.1,477.0 488.3,481.2 490.5,485.3 492.8,489.4 495.1,493.4 497.4,497.3 499.7,501.1 502.0,504.9 504.3,508.6 506.6,512.2 508.9,515.8 511.3,519.3 513.6,522.8 516.0,526.2 518.3,529.5 520.6,532.8 523.0,536.0 525.3,539.2 527.7,542.3 530.1,545.4 532.4,548.4 534.8,551.4 537.2,554.3 539.6,557.2 541.9,560.1 544.3,562.9 546.7,565.6 549.1,568.4 551.4,571.1 553.8,573.7 556.2,576.3 558.5,578.9 560.9,581.5 563.3,584.0 565.6,586.5 567.9,589.0 570.3,591.4 572.6,593.8 575.0,596.2 577.3,598.5 579.6,600.8 581.9,603.1 584.3,605.4 586.6,607.6 588.9,609.8 591.2,612.0 593.5,614.2 595.8,616.3 598.1,618.4 600.4,620.5 602.7,622.5 605.0,624.6 607.3,626.6 609.6,628.5 611.9,630.5 614.2,632.4 616.5,634.3 618.8,636.2 621.1,638.1 623.3,640.0 625.6,641.8 627.9,643.6 630.1,645.4 632.4,647.2 634.7,648.9 636.9,650.6 639.2,652.3 641.4,654.0 643.7,655.7 645.9,657.4 648.1,659.0 650.4,660.7 652.6,662.3 654.8,663.9 657.0,665.5 659.2,667.1 661.4,668.6 663.6,670.2 665.8,671.7 668.0,673.2 670.2,674.7 672.4,676.2 674.6,677.7 676.8,679.2 678.9,680.6 681.1,682.0 683.3,683.5 685.4,684.9 687.6,686.3 689.7,687.7 691.9,689.1 694.0,690.4 696.1,691.8 698.2,693.2 700.3,694.5 702.4,695.8 704.5,697.2 706.6,698.5 708.7,699.8 710.8,701.1 712.9,702.4 714.9,703.7 717.0,705.0 719.0,706.2 721.1,707.5 723.1,708.8 725.2,710.0 727.2,711.2 729.3,712.4 731.3,713.6 733.3,714.8 735.4,716.0 737.4,717.2 739.4,718.4 741.4,719.5 743.5,720.6 745.5,721.8 747.5,722.9 749.5,724.0 751.6,725.1 753.6,726.2 755.6,727.3 757.6,728.3 759.6,729.4 761.6,730.4 763.6,731.5 765.6,732.5 767.6,733.5 769.6,734.6 771.6,735.6 773.6,736.6 775.6,737.6 777.5,738.6 779.5,739.5 781.5,740.5 783.5,741.5 785.4,742.4 787.4,743.4 789.4,744.3 791.3,745.2 793.3,746.2 795.3,747.1 797.2,748.0 799.2,748.9 801.1,749.8 803.1,750.7 805.0,751.6M510.1,50.5 504.3,71.7 499.3,91.6 494.9,110.4 491.2,128.1 488.1,144.8 485.4,160.7 483.1,175.7 481.3,190.1 479.8,203.7 478.6,216.8 477.8,229.2 477.2,241.2 476.8,252.6 476.7,263.6 476.7,274.2 476.9,284.4 477.4,294.1 477.9,303.6 478.6,312.7 479.5,321.5 480.5,330.0 481.6,338.2 482.9,346.0 484.3,353.6 485.8,361.0 487.4,368.1 489.1,375.0 490.8,381.7 492.7,388.2 494.6,394.5 496.5,400.6 498.5,406.6 500.6,412.4 502.7,418.1 504.8,423.6 507.0,429.0 509.1,434.3 511.3,439.5 513.6,444.5 515.8,449.5 518.0,454.4 520.3,459.1 522.7,463.7 525.0,468.2 527.4,472.6 529.8,477.0 532.2,481.2 534.6,485.3 537.1,489.4 539.5,493.4 542.0,497.3 544.5,501.1 547.0,504.9 549.5,508.6 552.0,512.2 554.5,515.8 557.0,519.3 559.5,522.8 562.0,526.2 564.5,529.5 567.0,532.8 569.5,536.0 572.0,539.2 574.5,542.3 577.1,545.4 579.6,548.4 582.1,551.4 584.6,554.3 587.2,557.2 589.7,560.1 592.2,562.9 594.8,565.6 597.3,568.4 599.8,571.1 602.3,573.7 604.8,576.3 607.3,578.9 609.8,581.5 612.3,584.0 614.8,586.5 617.3,589.0 619.8,591.4 622.3,593.8 624.7,596.2 627.2,598.5 629.7,600.8 632.1,603.1 634.6,605.4 637.0,607.6 639.5,609.8 641.9,612.0 644.4,614.2 646.8,616.3 649.2,618.4 651.7,620.5 654.1,622.5 656.5,624.6 658.9,626.6 661.4,628.5 663.8,630.5 666.2,632.4 668.6,634.3 671.0,636.2 673.4,638.1 675.8,640.0 678.2,641.8 680.6,643.6 683.0,645.4 685.3,647.2 687.7,648.9 690.1,650.6 692.5,652.3 694.8,654.0 697.2,655.7 699.5,657.4 701.9,659.0 704.2,660.7 706.6,662.3 708.9,663.9 711.2,665.5 713.5,667.1 715.9,668.6 718.2,670.2 720.5,671.7 722.8,673.2 725.1,674.7 727.4,676.2 729.6,677.7 731.9,679.2 734.2,680.6 736.5,682.0 738.7,683.5 741.0,684.9 743.3,686.3 745.5,687.7 747.7,689.1 750.0,690.4 752.2,691.8 754.4,693.2 756.6,694.5 758.8,695.8 761.0,697.2 763.2,698.5 765.4,699.8 767.6,701.1 769.7,702.4 771.9,703.7 774.1,705.0 776.2,706.2 778.4,707.5 780.5,708.8 782.6,710.0 784.8,711.2 786.9,712.4 789.0,713.6 791.2,714.8 793.3,716.0 795.4,717.2 797.5,718.4 799.7,719.5 801.8,720.6 803.9,721.8 806.0,722.9 808.1,724.0 810.2,725.1 812.3,726.2 814.4,727.3 816.5,728.3 818.6,729.4 820.7,730.4 822.8,731.5 824.9,732.5 827.0,733.5 829.1,734.6 831.2,735.6 833.2,736.6 835.3,737.6 837.4,738.6 839.4,739.5 841.5,740.5 843.6,741.5 845.6,742.4 847.7,743.4 849.7,744.3 851.8,745.2 853.8,746.2 855.8,747.1 857.9,748.0 859.9,748.9 862.0,749.8 864.0,750.7 866.0,751.6M541.2,50.5 535.8,71.7 531.2,91.6 527.3,110.4 524.0,128.1 521.2,144.8 518.9,160.7 517.0,175.7 515.5,190.1 514.4,203.7 513.5,216.8 513.0,229.2 512.7,241.2 512.7,252.6 512.8,263.6 513.2,274.2 513.7,284.4 514.4,294.1 515.3,303.6 516.2,312.7 517.4,321.5 518.6,330.0 520.0,338.2 521.5,346.0 523.2,353.6 524.9,361.0 526.8,368.1 528.7,375.0 530.7,381.7 532.8,388.2 534.9,394.5 537.1,400.6 539.4,406.6 541.6,412.4 543.9,418.1 546.3,423.6 548.7,429.0 551.0,434.3 553.5,439.5 555.9,444.5 558.3,449.5 560.8,454.4 563.3,459.1 565.8,463.7 568.3,468.2 570.9,472.6 573.5,477.0 576.1,481.2 578.7,485.3 581.3,489.4 584.0,493.4 586.6,497.3 589.3,501.1 592.0,504.9 594.6,508.6 597.3,512.2 600.0,515.8 602.6,519.3 605.3,522.8 608.0,526.2 610.6,529.5 613.3,532.8 616.0,536.0 618.7,539.2 621.4,542.3 624.0,545.4 626.7,548.4 629.4,551.4 632.1,554.3 634.8,557.2 637.5,560.1 640.1,562.9 642.8,565.6 645.5,568.4 648.2,571.1 650.8,573.7 653.5,576.3 656.1,578.9 658.8,581.5 661.4,584.0 664.0,586.5 666.7,589.0 669.3,591.4 671.9,593.8 674.5,596.2 677.1,598.5 679.7,600.8 682.3,603.1 684.9,605.4 687.5,607.6 690.1,609.8 692.6,612.0 695.2,614.2 697.8,616.3 700.3,618.4 702.9,620.5 705.4,622.5 708.0,624.6 710.5,626.6 713.1,628.5 715.6,630.5 718.2,632.4 720.7,634.3 723.2,636.2 725.7,638.1 728.3,640.0 730.8,641.8 733.3,643.6 735.8,645.4 738.3,647.2 740.8,648.9 743.3,650.6 745.8,652.3 748.2,654.0 750.7,655.7 753.2,657.4 755.6,659.0 758.1,660.7 760.5,662.3 763.0,663.9 765.4,665.5 767.8,667.1 770.3,668.6 772.7,670.2 775.1,671.7 777.5,673.2 779.9,674.7 782.3,676.2 784.7,677.7 787.1,679.2 789.5,680.6 791.8,682.0 794.2,683.5 796.6,684.9 798.9,686.3 801.3,687.7 803.6,689.1 806.0,690.4 808.3,691.8 810.6,693.2 812.9,694.5 815.2,695.8 817.5,697.2 819.8,698.5 822.1,699.8 824.4,701.1 826.6,702.4 828.9,703.7 831.1,705.0 833.4,706.2 835.6,707.5 837.9,708.8 840.1,710.0 842.3,711.2 844.6,712.4 846.8,713.6 849.0,714.8 851.2,716.0 853.5,717.2 855.7,718.4 857.9,719.5 860.1,720.6 862.3,721.8 864.5,722.9 866.7,724.0 868.9,725.1 871.1,726.2 873.3,727.3 875.5,728.3 877.7,729.4 879.9,730.4 882.0,731.5 884.2,732.5 886.4,733.5 888.6,734.6 890.7,735.6 892.9,736.6 895.0,737.6 897.2,738.6 899.4,739.5 901.5,740.5 903.6,741.5 905.8,742.4 907.9,743.4 910.1,744.3 912.2,745.2 914.3,746.2 916.4,747.1 918.6,748.0 920.7,748.9 922.8,749.8 924.9,750.7 927.0,751.6M572.3,50.5 567.3,71.7 563.1,91.6 559.6,110.4 556.7,128.1 554.3,144.8 552.4,160.7 550.9,175.7 549.7,190.1 548.9,203.7 548.4,216.8 548.2,229.2 548.3,241.2 548.5,252.6 549.0,263.6 549.6,274.2 550.5,284.4 551.5,294.1 552.6,303.6 553.9,312.7 555.2,321.5 556.8,330.0 558.4,338.2 560.2,346.0 562.1,353.6 564.1,361.0 566.2,368.1 568.4,375.0 570.6,381.7 573.0,388.2 575.3,394.5 577.7,400.6 580.2,406.6 582.7,412.4 585.2,418.1 587.8,423.6 590.4,429.0 593.0,434.3 595.6,439.5 598.2,444.5 600.9,449.5 603.5,454.4 606.2,459.1 608.9,463.7 611.7,468.2 614.4,472.6 617.2,477.0 620.0,481.2 622.8,485.3 625.6,489.4 628.4,493.4 631.3,497.3 634.1,501.1 636.9,504.9 639.8,508.6 642.6,512.2 645.5,515.8 648.3,519.3 651.2,522.8 654.0,526.2 656.8,529.5 659.7,532.8 662.5,536.0 665.3,539.2 668.2,542.3 671.0,545.4 673.9,548.4 676.7,551.4 679.6,554.3 682.4,557.2 685.2,560.1 688.1,562.9 690.9,565.6 693.7,568.4 696.5,571.1 699.3,573.7 702.1,576.3 704.9,578.9 707.7,581.5 710.5,584.0 713.3,586.5 716.0,589.0 718.8,591.4 721.5,593.8 724.3,596.2 727.0,598.5 729.8,600.8 732.5,603.1 735.2,605.4 737.9,607.6 740.6,609.8 743.3,612.0 746.0,614.2 748.7,616.3 751.4,618.4 754.1,620.5 756.8,622.5 759.5,624.6 762.1,626.6 764.8,628.5 767.5,630.5 770.1,632.4 772.8,634.3 775.4,636.2 778.1,638.1 780.7,640.0 783.3,641.8 786.0,643.6 788.6,645.4 791.2,647.2 793.8,648.9 796.4,650.6 799.0,652.3 801.6,654.0 804.2,655.7 806.8,657.4 809.4,659.0 811.9,660.7 814.5,662.3 817.0,663.9 819.6,665.5 822.1,667.1 824.7,668.6 827.2,670.2 829.7,671.7 832.2,673.2 834.7,674.7 837.3,676.2 839.8,677.7 842.3,679.2 844.7,680.6 847.2,682.0 849.7,683.5 852.2,684.9 854.6,686.3 857.1,687.7 859.5,689.1 862.0,690.4 864.4,691.8 866.8,693.2 869.2,694.5 871.6,695.8 874.0,697.2 876.4,698.5 878.8,699.8 881.2,701.1 883.5,702.4 885.9,703.7 888.2,705.0 890.6,706.2 892.9,707.5 895.3,708.8 897.6,710.0 899.9,711.2 902.2,712.4 904.6,713.6 906.9,714.8 909.2,716.0 911.5,717.2 913.8,718.4 916.1,719.5 918.4,720.6 920.7,721.8 923.0,722.9 925.3,724.0 927.6,725.1 929.9,726.2 932.2,727.3 934.4,728.3 936.7,729.4 939.0,730.4 941.3,731.5 943.5,732.5 945.8,733.5 948.0,734.6 950.3,735.6 952.5,736.6 954.8,737.6 957.0,738.6 959.3,739.5 961.5,740.5 963.7,741.5 966.0,742.4 968.2,743.4 970.4,744.3 972.6,745.2 974.8,746.2 977.0,747.1 979.2,748.0 981.4,748.9 983.6,749.8 985.8,750.7 988.0,751.6"/>
<path stroke="#000080" d="M72.6,751.6 71.9,750.9 71.2,750.1 70.4,749.4 69.7,748.7 68.9,748.0 68.2,747.3 67.4,746.5 66.7,745.8 66.0,745.0 65.2,744.3 64.5,743.6 63.7,742.8 63.0,742.0 62.2,741.3 61.5,740.5 60.8,739.7 60.0,738.9 59.3,738.2 58.5,737.4 57.8,736.6 57.1,735.8 56.3,735.0 55.6,734.2 54.9,733.3 54.1,732.5 53.4,731.7 52.7,730.9 51.9,730.0 51.2,729.2 50.5,728.3 49.7,727.5 49.0,726.6 48.3,725.7 47.5,724.9 46.8,724.0 46.1,723.1 45.3,722.2 44.6,721.3 43.9,720.4 43.2,719.5 42.4,718.6 41.7,717.7 41.0,716.7 40.3,715.8 39.6,714.8 38.9,713.9 38.1,712.9 37.4,712.0 36.7,711.0 36.0,710.0 35.3,709.0 34.6,708.0 33.9,707.0 33.2,706.0 32.5,705.0 31.8,704.0 31.1,702.9 30.4,701.9 29.7,700.9 29.0,699.8 28.2,698.8 27.5,697.7 26.8,696.6 26.1,695.6 25.4,694.5 24.7,693.4 24.0,692.3 23.3,691.3 22.5,690.2 21.8,689.1 21.1,688.0 20.4,686.8 19.7,685.7 19.0,684.6 18.2,683.5 17.5,682.3 16.8,681.2 16.1,680.0 15.4,678.9 14.6,677.7 13.9,676.5 13.2,675.3 12.5,674.1 11.8,672.9 11.1,671.7 10.4,670.5 9.7,669.3 8.9,668.0 8.2,666.8 7.5,665.5 6.8,664.2 6.1,662.9 5.4,661.7 4.7,660.4 4.0,659.0 3.3,657.7 2.7,656.4 2.0,655.1 1.3,653.7 0.6,652.3 -0.1,651.0 -0.8,649.6 -1.5,648.2 -2.2,646.8 -2.8,645.4 -3.5,644.0 -4.2,642.5 -4.9,641.1 -5.5,639.6 -6.2,638.1 -6.8,636.6 -7.5,635.1 -8.2,633.6 -8.8,632.1 -9.4,630.5 -10.1,628.9 -10.7,627.4 -11.4,625.8 -12.0,624.1 -12.6,622.5 -13.2,620.9 -13.8,619.2 -14.4,617.6 -15.0,615.9 -15.6,614.2 -16.2,612.4 -16.8,610.7 -17.4,608.9 -18.0,607.2 -18.6,605.4 -19.2,603.6 -19.7,601.8 -20.3,599.9 -20.8,598.1 -21.4,596.2 -21.9,594.3 -22.5,592.4 -23.0,590.4 -23.5,588.5 -24.1,586.5 -24.6,584.5 -25.1,582.5 -25.6,580.5 -26.1,578.4 -26.6,576.3 -27.1,574.2 -27.6,572.1 -28.1,570.0 -28.6,567.8 -29.0,565.6 -29.5,563.4 -29.9,561.2 -30.4,558.9 -30.8,556.7 -31.2,554.3 -31.7,552.0 -32.1,549.6 -32.4,547.2 -32.8,544.8 -33.2,542.3 -33.5,539.8 -33.9,537.3 -34.2,534.7 -34.5,532.1 -34.8,529.5 -35.1,526.8 -35.3,524.1 -35.6,521.4 -35.8,518.6 -36.0,515.8 -36.3,512.9 -36.4,510.0 -36.6,507.1 -36.8,504.1 -36.9,501.1 -37.0,498.1 -37.1,495.0 -37.2,491.8 -37.3,488.6 -37.3,485.3 -37.3,482.0 -37.3,478.7 -37.2,475.3 -37.2,471.8 -37.1,468.2 -36.9,464.6 -36.7,460.9 -36.5,457.2 -36.3,453.4 -36.0,449.5 -35.6,445.5 -35.3,441.5 -34.9,437.4 -34.4,433.3 -34.0,429.0 -33.4,424.7 -32.9,420.3 -32.3,415.8 -31.7,411.2 -31.0,406.6 -30.2,401.8 -29.4,397.0 -28.6,392.0 -27.6,386.9 -26.6,381.7 -25.6,376.4 -24.4,370.9 -23.2,365.3 -21.8,359.5 -20.4,353.6 -18.9,347.6 -17.2,341.3 -15.5,334.9 -13.6,328.3 -11.5,321.5 -9.4,314.5 -7.1,307.3 -4.7,299.9 -2.1,292.2M133.2,751.6 132.4,750.9 131.7,750.1 130.9,749.4 130.1,748.7 129.3,748.0 128.5,747.3 127.8,746.5 127.0,745.8 126.2,745.0 125.4,744.3 124.6,743.6 123.8,742.8 123.1,742.0 122.3,741.3 121.5,740.5 120.7,739.7 119.9,738.9 119.2,738.2 118.4,737.4 117.6,736.6 116.8,735.8 116.0,735.0 115.2,734.2 114.5,733.3 113.7,732.5 112.9,731.7 112.1,730.9 111.3,730.0 110.5,729.2 109.8,728.3 109.0,727.5 108.2,726.6 107.4,725.7 106.6,724.9 105.8,724.0 105.1,723.1 104.3,722.2 103.5,721.3 102.7,720.4 101.9,719.5 101.1,718.6 100.4,717.7 99.6,716.7 98.8,715.8 98.0,714.8 97.3,713.9 96.5,712.9 95.7,712.0 94.9,711.0 94.2,710.0 93.4,709.0 92.6,708.0 91.9,707.0 91.1,706.0 90.3,705.0 89.6,704.0 88.8,702.9 88.0,701.9 87.2,700.9 86.5,699.8 85.7,698.8 84.9,697.7 84.1,696.6 83.3,695.6 82.6,694.5 81.8,693.4 81.0,692.3 80.2,691.3 79.4,690.2 78.6,689.1 77.8,688.0 77.0,686.8 76.2,685.7 75.4,684.6 74.7,683.5 73.9,682.3 73.1,681.2 72.3,680.0 71.5,678.9 70.7,677.7 69.9,676.5 69.1,675.3 68.3,674.1 67.5,672.9 66.7,671.7 65.9,670.5 65.1,669.3 64.3,668.0 63.5,666.8 62.7,665.5 62.0,664.2 61.2,662.9 60.4,661.7 59.6,660.4 58.8,659.0 58.0,657.7 57.3,656.4 56.5,655.1 55.7,653.7 54.9,652.3 54.1,651.0 53.4,649.6 52.6,648.2 51.8,646.8 51.0,645.4 50.3,644.0 49.5,642.5 48.7,641.1 48.0,639.6 47.2,638.1 46.5,636.6 45.7,635.1 45.0,633.6 44.2,632.1 43.5,630.5 42.7,628.9 42.0,627.4 41.3,625.8 40.5,624.1 39.8,622.5 39.1,620.9 38.4,619.2 37.7,617.6 37.0,615.9 36.3,614.2 35.6,612.4 34.9,610.7 34.2,608.9 33.5,607.2 32.8,605.4 32.1,603.6 31.4,601.8 30.8,599.9 30.1,598.1 29.4,596.2 28.8,594.3 28.1,592.4 27.5,590.4 26.8,588.5 26.2,586.5 25.6,584.5 24.9,582.5 24.3,580.5 23.7,578.4 23.1,576.3 22.5,574.2 21.9,572.1 21.3,570.0 20.7,567.8 20.1,565.6 19.5,563.4 18.9,561.2 18.3,558.9 17.8,556.7 17.2,554.3 16.7,552.0 16.2,549.6 15.7,547.2 15.2,544.8 14.7,542.3 14.2,539.8 13.7,537.3 13.3,534.7 12.8,532.1 12.4,529.5 12.0,526.8 11.6,524.1 11.2,521.4 10.8,518.6 10.5,515.8 10.1,512.9 9.8,510.0 9.5,507.1 9.2,504.1 8.9,501.1 8.6,498.1 8.4,495.0 8.1,491.8 7.9,488.6 7.7,485.3 7.6,482.0 7.5,478.7 7.4,475.3 7.3,471.8 7.2,468.2 7.2,464.6 7.2,460.9 7.3,457.2 7.4,453.4 7.5,449.5 7.7,445.5 7.9,441.5 8.1,437.4 8.4,433.3 8.7,429.0 9.0,424.7 9.4,420.3 9.8,415.8 10.3,411.2 10.8,406.6 11.3,401.8 11.9,397.0 12.6,392.0 13.4,386.9 14.2,381.7 15.1,376.4 16.0,370.9 17.0,365.3 18.2,359.5 19.4,353.6 20.7,347.6 22.2,341.3 23.7,334.9 25.4,328.3 27.2,321.5 29.2,314.5 31.2,307.3 33.4,299.9 35.7,292.2 38.2,284.4 40.9,276.2 43.6,267.9 46.6,259.3 49.8,250.4 53.1,241.2 56.7,231.7M193.3,751.6 192.5,750.9 191.7,750.1 190.9,749.4 190.1,748.7 189.4,748.0 188.6,747.3 187.8,746.5 187.0,745.8 186.2,745.0 185.5,744.3 184.7,743.6 183.9,742.8 183.1,742.0 182.3,741.3 181.5,740.5 180.7,739.7 179.9,738.9 179.1,738.2 178.3,737.4 177.5,736.6 176.7,735.8 175.9,735.0 175.1,734.2 174.3,733.3 173.5,732.5 172.7,731.7 171.9,730.9 171.1,730.0 170.3,729.2 169.5,728.3 168.7,727.5 167.9,726.6 167.1,725.7 166.3,724.9 165.5,724.0 164.6,723.1 163.8,722.2 163.0,721.3 162.2,720.4 161.4,719.5 160.6,718.6 159.8,717.7 158.9,716.7 158.1,715.8 157.3,714.8 156.5,713.9 155.7,712.9 154.9,712.0 154.1,711.0 153.3,710.0 152.4,709.0 151.6,708.0 150.8,707.0 150.0,706.0 149.2,705.0 148.4,704.0 147.5,702.9 146.7,701.9 145.9,700.9 145.1,699.8 144.2,698.8 143.4,697.7 142.6,696.6 141.8,695.6 140.9,694.5 140.1,693.4 139.2,692.3 138.4,691.3 137.5,690.2 136.7,689.1 135.8,688.0 135.0,686.8 134.1,685.7 133.3,684.6 132.4,683.5 131.5,682.3 130.7,681.2 129.8,680.0 128.9,678.9 128.1,677.7 127.2,676.5 126.4,675.3 125.5,674.1 124.6,672.9 123.8,671.7 122.9,670.5 122.0,669.3 121.2,668.0 120.3,666.8 119.4,665.5 118.6,664.2 117.7,662.9 116.8,661.7 116.0,660.4 115.1,659.0 114.2,657.7 113.4,656.4 112.5,655.1 111.7,653.7 110.8,652.3 109.9,651.0 109.1,649.6 108.2,648.2 107.3,646.8 106.5,645.4 105.6,644.0 104.8,642.5 103.9,641.1 103.1,639.6 102.2,638.1 101.4,636.6 100.5,635.1 99.7,633.6 98.8,632.1 98.0,630.5 97.2,628.9 96.3,627.4 95.5,625.8 94.7,624.1 93.8,622.5 93.0,620.9 92.2,619.2 91.4,617.6 90.6,615.9 89.8,614.2 89.0,612.4 88.2,610.7 87.4,608.9 86.6,607.2 85.8,605.4 85.0,603.6 84.2,601.8 83.4,599.9 82.7,598.1 81.9,596.2 81.1,594.3 80.3,592.4 79.6,590.4 78.8,588.5 78.1,586.5 77.3,584.5 76.6,582.5 75.8,580.5 75.1,578.4 74.4,576.3 73.6,574.2 72.9,572.1 72.2,570.0 71.4,567.8 70.7,565.6 70.0,563.4 69.3,561.2 68.6,558.9 68.0,556.7 67.3,554.3 66.6,552.0 66.0,549.6 65.3,547.2 64.7,544.8 64.0,542.3 63.4,539.8 62.8,537.3 62.2,534.7 61.7,532.1 61.1,529.5 60.6,526.8 60.0,524.1 59.5,521.4 59.0,518.6 58.5,515.8 58.0,512.9 57.5,510.0 57.0,507.1 56.6,504.1 56.1,501.1 55.7,498.1 55.3,495.0 55.0,491.8 54.6,488.6 54.3,485.3 53.9,482.0 53.7,478.7 53.4,475.3 53.2,471.8 52.9,468.2 52.8,464.6 52.6,460.9 52.5,457.2 52.4,453.4 52.4,449.5 52.4,445.5 52.4,441.5 52.5,437.4 52.6,433.3 52.7,429.0 52.8,424.7 53.0,420.3 53.3,415.8 53.5,411.2 53.9,406.6 54.2,401.8 54.7,397.0 55.1,392.0 55.7,386.9 56.3,381.7 57.0,376.4 57.7,370.9 58.6,365.3 59.5,359.5 60.5,353.6 61.6,347.6 62.8,341.3 64.2,334.9 65.6,328.3 67.2,321.5 68.9,314.5 70.8,307.3 72.7,299.9 74.8,292.2 77.0,284.4 79.4,276.2 82.0,267.9 84.7,259.3 87.6,250.4 90.6,241.2 93.9,231.7 97.4,221.8 101.2,211.6 105.2,201.0 109.4,190.1 114.0,178.6M252.5,751.6 251.8,750.9 251.1,750.1 250.3,749.4 249.6,748.7 248.9,748.0 248.2,747.3 247.4,746.5 246.7,745.8 246.0,745.0 245.2,744.3 244.5,743.6 243.7,742.8 243.0,742.0 242.2,741.3 241.5,740.5 240.8,739.7 240.0,738.9 239.2,738.2 238.5,737.4 237.7,736.6 237.0,735.8 236.2,735.0 235.5,734.2 234.7,733.3 233.9,732.5 233.1,731.7 232.4,730.9 231.6,730.0 230.8,729.2 230.0,728.3 229.3,727.5 228.5,726.6 227.7,725.7 226.9,724.9 226.1,724.0 225.3,723.1 224.5,722.2 223.7,721.3 222.9,720.4 222.1,719.5 221.3,718.6 220.5,717.7 219.7,716.7 218.9,715.8 218.1,714.8 217.3,713.9 216.5,712.9 215.7,712.0 214.9,711.0 214.1,710.0 213.3,709.0 212.4,708.0 211.6,707.0 210.8,706.0 210.0,705.0 209.2,704.0 208.3,702.9 207.5,701.9 206.7,700.9 205.8,699.8 205.0,698.8 204.1,697.7 203.3,696.6 202.4,695.6 201.6,694.5 200.7,693.4 199.8,692.3 199.0,691.3 198.1,690.2 197.2,689.1 196.3,688.0 195.4,686.8 194.6,685.7 193.7,684.6 192.8,683.5 191.9,682.3 191.0,681.2 190.1,680.0 189.2,678.9 188.3,677.7 187.4,676.5 186.4,675.3 185.5,674.1 184.6,672.9 183.7,671.7 182.8,670.5 181.9,669.3 181.0,668.0 180.0,666.8 179.1,665.5 178.2,664.2 177.3,662.9 176.4,661.7 175.4,660.4 174.5,659.0 173.6,657.7 172.6,656.4 171.7,655.1 170.8,653.7 169.9,652.3 168.9,651.0 168.0,649.6 167.0,648.2 166.1,646.8 165.2,645.4 164.2,644.0 163.3,642.5 162.4,641.1 161.4,639.6 160.5,638.1 159.6,636.6 158.6,635.1 157.7,633.6 156.8,632.1 155.9,630.5 154.9,628.9 154.0,627.4 153.1,625.8 152.2,624.1 151.3,622.5 150.4,620.9 149.4,619.2 148.5,617.6 147.6,615.9 146.7,614.2 145.8,612.4 144.9,610.7 144.0,608.9 143.1,607.2 142.2,605.4 141.3,603.6 140.4,601.8 139.5,599.9 138.6,598.1 137.8,596.2 136.9,594.3 136.0,592.4 135.1,590.4 134.2,588.5 133.4,586.5 132.5,584.5 131.6,582.5 130.8,580.5 129.9,578.4 129.1,576.3 128.2,574.2 127.3,572.1 126.5,570.0 125.7,567.8 124.8,565.6 124.0,563.4 123.2,561.2 122.3,558.9 121.5,556.7 120.7,554.3 119.9,552.0 119.1,549.6 118.3,547.2 117.5,544.8 116.8,542.3 116.0,539.8 115.3,537.3 114.6,534.7 113.8,532.1 113.1,529.5 112.4,526.8 111.7,524.1 111.1,521.4 110.4,518.6 109.7,515.8 109.1,512.9 108.5,510.0 107.8,507.1 107.2,504.1 106.6,501.1 106.1,498.1 105.5,495.0 105.0,491.8 104.5,488.6 104.0,485.3 103.5,482.0 103.0,478.7 102.6,475.3 102.2,471.8 101.8,468.2 101.4,464.6 101.1,460.9 100.8,457.2 100.6,453.4 100.4,449.5 100.2,445.5 100.0,441.5 99.9,437.4 99.8,433.3 99.7,429.0 99.7,424.7 99.7,420.3 99.7,415.8 99.8,411.2 99.9,406.6 100.1,401.8 100.3,397.0 100.6,392.0 100.9,386.9 101.3,381.7 101.8,376.4 102.3,370.9 102.9,365.3 103.6,359.5 104.4,353.6 105.3,347.6 106.3,341.3 107.4,334.9 108.6,328.3 109.9,321.5 111.4,314.5 113.0,307.3 114.7,299.9 116.5,292.2 118.5,284.4 120.6,276.2 122.9,267.9 125.3,259.3 127.9,250.4 130.7,241.2 133.7,231.7 137.0,221.8 140.4,211.6 144.1,201.0 148.0,190.1 152.3,178.6 156.8,166.8 161.7,154.4 166.9,141.5 172.6,128.1 178.6,114.0M310.8,751.6 310.2,750.9 309.6,750.1 309.0,749.4 308.4,748.7 307.7,748.0 307.1,747.3 306.5,746.5 305.9,745.8 305.3,745.0 304.7,744.3 304.0,743.6 303.4,742.8 302.8,742.0 302.1,741.3 301.5,740.5 300.9,739.7 300.2,738.9 299.6,738.2 298.9,737.4 298.3,736.6 297.6,735.8 297.0,735.0 296.3,734.2 295.7,733.3 295.0,732.5 294.3,731.7 293.7,730.9 293.0,730.0 292.3,729.2 291.6,728.3 291.0,727.5 290.3,726.6 289.6,725.7 288.9,724.9 288.2,724.0 287.5,723.1 286.8,722.2 286.1,721.3 285.4,720.4 284.7,719.5 284.0,718.6 283.3,717.7 282.5,716.7 281.8,715.8 281.1,714.8 280.4,713.9 279.6,712.9 278.9,712.0 278.2,711.0 277.5,710.0 276.7,709.0 276.0,708.0 275.2,707.0 274.5,706.0 273.7,705.0 273.0,704.0 272.2,702.9 271.4,701.9 270.7,700.9 269.9,699.8 269.1,698.8 268.3,697.7 267.5,696.6 266.7,695.6 265.9,694.5 265.1,693.4 264.3,692.3 263.5,691.3 262.6,690.2 261.8,689.1 261.0,688.0 260.1,686.8 259.3,685.7 258.4,684.6 257.5,683.5 256.7,682.3 255.8,681.2 254.9,680.0 254.0,678.9 253.2,677.7 252.3,676.5 251.4,675.3 250.5,674.1 249.6,672.9 248.7,671.7 247.8,670.5 246.9,669.3 246.0,668.0 245.0,666.8 244.1,665.5 243.2,664.2 242.3,662.9 241.3,661.7 240.4,660.4 239.5,659.0 238.5,657.7 237.6,656.4 236.6,655.1 235.7,653.7 234.7,652.3 233.8,651.0 232.8,649.6 231.8,648.2 230.9,646.8 229.9,645.4 228.9,644.0 228.0,642.5 227.0,641.1 226.0,639.6 225.0,638.1 224.1,636.6 223.1,635.1 222.1,633.6 221.1,632.1 220.1,630.5 219.1,628.9 218.2,627.4 217.2,625.8 216.2,624.1 215.2,622.5 214.2,620.9 213.2,619.2 212.2,617.6 211.3,615.9 210.3,614.2 209.3,612.4 208.3,610.7 207.3,608.9 206.3,607.2 205.3,605.4 204.3,603.6 203.4,601.8 202.4,599.9 201.4,598.1 200.4,596.2 199.4,594.3 198.4,592.4 197.5,590.4 196.5,588.5 195.5,586.5 194.5,584.5 193.5,582.5 192.5,580.5 191.6,578.4 190.6,576.3 189.6,574.2 188.6,572.1 187.7,570.0 186.7,567.8 185.7,565.6 184.8,563.4 183.8,561.2 182.8,558.9 181.9,556.7 180.9,554.3 180.0,552.0 179.1,549.6 178.1,547.2 177.2,544.8 176.3,542.3 175.4,539.8 174.5,537.3 173.6,534.7 172.7,532.1 171.9,529.5 171.0,526.8 170.2,524.1 169.3,521.4 168.5,518.6 167.7,515.8 166.9,512.9 166.1,510.0 165.3,507.1 164.5,504.1 163.7,501.1 163.0,498.1 162.2,495.0 161.5,491.8 160.8,488.6 160.1,485.3 159.5,482.0 158.8,478.7 158.2,475.3 157.6,471.8 157.0,468.2 156.5,464.6 156.0,460.9 155.5,457.2 155.0,453.4 154.6,449.5 154.2,445.5 153.9,441.5 153.5,437.4 153.2,433.3 152.9,429.0 152.7,424.7 152.4,420.3 152.2,415.8 152.1,411.2 152.0,406.6 151.9,401.8 151.9,397.0 152.0,392.0 152.1,386.9 152.2,381.7 152.4,376.4 152.7,370.9 153.1,365.3 153.5,359.5 154.1,353.6 154.7,347.6 155.4,341.3 156.3,334.9 157.2,328.3 158.3,321.5 159.5,314.5 160.8,307.3 162.2,299.9 163.7,292.2 165.4,284.4 167.2,276.2 169.2,267.9 171.3,259.3 173.6,250.4 176.1,241.2 178.8,231.7 181.7,221.8 184.8,211.6 188.1,201.0 191.7,190.1 195.6,178.6 199.8,166.8 204.3,154.4 209.1,141.5 214.4,128.1 220.0,114.0 226.1,99.3 232.7,83.8 239.9,67.6 247.6,50.5M368.3,751.6 367.9,750.9 367.4,750.1 367.0,749.4 366.5,748.7 366.1,748.0 365.6,747.3 365.2,746.5 364.7,745.8 364.3,745.0 363.8,744.3 363.4,743.6 362.9,742.8 362.4,742.0 362.0,741.3 361.5,740.5 361.0,739.7 360.6,738.9 360.1,738.2 359.6,737.4 359.1,736.6 358.7,735.8 358.2,735.0 357.7,734.2 357.2,733.3 356.7,732.5 356.2,731.7 355.7,730.9 355.2,730.0 354.7,729.2 354.2,728.3 353.7,727.5 353.2,726.6 352.7,725.7 352.2,724.9 351.7,724.0 351.1,723.1 350.6,722.2 350.1,721.3 349.6,720.4 349.0,719.5 348.5,718.6 347.9,717.7 347.4,716.7 346.9,715.8 346.3,714.8 345.8,713.9 345.2,712.9 344.7,712.0 344.1,711.0 343.6,710.0 343.0,709.0 342.4,708.0 341.9,707.0 341.3,706.0 340.7,705.0 340.1,704.0 339.5,702.9 338.9,701.9 338.3,700.9 337.7,699.8 337.1,698.8 336.5,697.7 335.9,696.6 335.2,695.6 334.6,694.5 334.0,693.4 333.3,692.3 332.6,691.3 332.0,690.2 331.3,689.1 330.6,688.0 329.9,686.8 329.2,685.7 328.5,684.6 327.8,683.5 327.1,682.3 326.4,681.2 325.7,680.0 324.9,678.9 324.2,677.7 323.5,676.5 322.7,675.3 321.9,674.1 321.2,672.9 320.4,671.7 319.6,670.5 318.9,669.3 318.1,668.0 317.3,666.8 316.5,665.5 315.7,664.2 314.9,662.9 314.1,661.7 313.3,660.4 312.4,659.0 311.6,657.7 310.8,656.4 309.9,655.1 309.1,653.7 308.2,652.3 307.3,651.0 306.5,649.6 305.6,648.2 304.7,646.8 303.8,645.4 302.9,644.0 302.0,642.5 301.1,641.1 300.2,639.6 299.3,638.1 298.4,636.6 297.4,635.1 296.5,633.6 295.6,632.1 294.6,630.5 293.7,628.9 292.7,627.4 291.8,625.8 290.8,624.1 289.9,622.5 288.9,620.9 287.9,619.2 286.9,617.6 286.0,615.9 285.0,614.2 284.0,612.4 283.0,610.7 282.0,608.9 281.0,607.2 280.0,605.4 279.0,603.6 278.0,601.8 277.0,599.9 275.9,598.1 274.9,596.2 273.9,594.3 272.9,592.4 271.8,590.4 270.8,588.5 269.7,586.5 268.7,584.5 267.6,582.5 266.6,580.5 265.5,578.4 264.5,576.3 263.4,574.2 262.3,572.1 261.3,570.0 260.2,567.8 259.1,565.6 258.1,563.4 257.0,561.2 255.9,558.9 254.8,556.7 253.8,554.3 252.7,552.0 251.6,549.6 250.6,547.2 249.5,544.8 248.5,542.3 247.4,539.8 246.4,537.3 245.3,534.7 244.3,532.1 243.3,529.5 242.3,526.8 241.3,524.1 240.3,521.4 239.2,518.6 238.3,515.8 237.3,512.9 236.3,510.0 235.3,507.1 234.3,504.1 233.4,501.1 232.4,498.1 231.5,495.0 230.6,491.8 229.7,488.6 228.8,485.3 227.9,482.0 227.0,478.7 226.2,475.3 225.4,471.8 224.6,468.2 223.8,464.6 223.0,460.9 222.3,457.2 221.6,453.4 221.0,449.5 220.3,445.5 219.7,441.5 219.1,437.4 218.6,433.3 218.0,429.0 217.5,424.7 217.0,420.3 216.6,415.8 216.2,411.2 215.8,406.6 215.4,401.8 215.1,397.0 214.9,392.0 214.7,386.9 214.6,381.7 214.5,376.4 214.5,370.9 214.6,365.3 214.7,359.5 214.9,353.6 215.2,347.6 215.6,341.3 216.1,334.9 216.8,328.3 217.5,321.5 218.4,314.5 219.3,307.3 220.4,299.9 221.6,292.2 222.9,284.4 224.4,276.2 226.0,267.9 227.7,259.3 229.6,250.4 231.7,241.2 234.0,231.7 236.5,221.8 239.1,211.6 242.1,201.0 245.2,190.1 248.7,178.6 252.4,166.8 256.5,154.4 260.8,141.5 265.6,128.1 270.8,114.0 276.4,99.3 282.5,83.8 289.1,67.6 296.3,50.5M425.6,751.6 425.4,750.9 425.1,750.1 424.8,749.4 424.6,748.7 424.3,748.0 424.0,747.3 423.7,746.5 423.5,745.8 423.2,745.0 422.9,744.3 422.6,743.6 422.3,742.8 422.1,742.0 421.8,741.3 421.5,740.5 421.2,739.7 420.9,738.9 420.7,738.2 420.4,737.4 420.1,736.6 419.8,735.8 419.5,735.0 419.2,734.2 418.9,733.3 418.7,732.5 418.4,731.7 418.1,730.9 417.8,730.0 417.5,729.2 417.2,728.3 416.9,727.5 416.6,726.6 416.3,725.7 416.0,724.9 415.7,724.0 415.4,723.1 415.1,722.2 414.8,721.3 414.5,720.4 414.2,719.5 413.9,718.6 413.6,717.7 413.3,716.7 413.0,715.8 412.7,714.8 412.3,713.9 412.0,712.9 411.7,712.0 411.4,711.0 411.1,710.0 410.8,709.0 410.5,708.0 410.1,707.0 409.8,706.0 409.5,705.0 409.1,704.0 408.8,702.9 408.5,701.9 408.1,700.9 407.8,699.8 407.4,698.8 407.1,697.7 406.7,696.6 406.3,695.6 406.0,694.5 405.6,693.4 405.2,692.3 404.8,691.3 404.4,690.2 404.0,689.1 403.6,688.0 403.2,686.8 402.8,685.7 402.4,684.6 402.0,683.5 401.5,682.3 401.1,681.2 400.6,680.0 400.2,678.9 399.8,677.7 399.3,676.5 398.8,675.3 398.4,674.1 397.9,672.9 397.4,671.7 396.9,670.5 396.5,669.3 396.0,668.0 395.5,666.8 395.0,665.5 394.5,664.2 394.0,662.9 393.4,661.7 392.9,660.4 392.4,659.0 391.9,657.7 391.3,656.4 390.8,655.1 390.2,653.7 389.6,652.3 389.1,651.0 388.5,649.6 387.9,648.2 387.3,646.8 386.7,645.4 386.1,644.0 385.5,642.5 384.9,641.1 384.3,639.6 383.6,638.1 383.0,636.6 382.4,635.1 381.7,633.6 381.1,632.1 380.4,630.5 379.7,628.9 379.0,627.4 378.4,625.8 377.7,624.1 377.0,622.5 376.3,620.9 375.5,619.2 374.8,617.6 374.1,615.9 373.3,614.2 372.6,612.4 371.8,610.7 371.1,608.9 370.3,607.2 369.5,605.4 368.7,603.6 367.9,601.8 367.1,599.9 366.3,598.1 365.4,596.2 364.6,594.3 363.8,592.4 362.9,590.4 362.0,588.5 361.1,586.5 360.2,584.5 359.3,582.5 358.4,580.5 357.5,578.4 356.6,576.3 355.6,574.2 354.7,572.1 353.7,570.0 352.7,567.8 351.7,565.6 350.7,563.4 349.7,561.2 348.7,558.9 347.7,556.7 346.7,554.3 345.6,552.0 344.6,549.6 343.5,547.2 342.5,544.8 341.4,542.3 340.4,539.8 339.3,537.3 338.2,534.7 337.2,532.1 336.1,529.5 335.0,526.8 333.9,524.1 332.8,521.4 331.8,518.6 330.7,515.8 329.6,512.9 328.5,510.0 327.3,507.1 326.2,504.1 325.1,501.1 324.0,498.1 322.9,495.0 321.8,491.8 320.7,488.6 319.6,485.3 318.5,482.0 317.4,478.7 316.4,475.3 315.3,471.8 314.3,468.2 313.2,464.6 312.2,460.9 311.2,457.2 310.3,453.4 309.3,449.5 308.4,445.5 307.5,441.5 306.6,437.4 305.7,433.3 304.8,429.0 304.0,424.7 303.1,420.3 302.3,415.8 301.6,411.2 300.8,406.6 300.1,401.8 299.5,397.0 298.8,392.0 298.3,386.9 297.7,381.7 297.2,376.4 296.8,370.9 296.4,365.3 296.0,359.5 295.7,353.6 295.5,347.6 295.3,341.3 295.3,334.9 295.3,328.3 295.5,321.5 295.9,314.5 296.3,307.3 296.9,299.9 297.5,292.2 298.3,284.4 299.2,276.2 300.3,267.9 301.4,259.3 302.7,250.4 304.2,241.2 305.8,231.7 307.6,221.8 309.6,211.6 311.8,201.0 314.2,190.1 316.9,178.6 320.1,166.8 323.5,154.4 327.3,141.5 331.4,128.1 336.0,114.0 340.9,99.3 346.3,83.8 352.2,67.6 358.7,50.5M483.3,751.6 483.2,750.9 483.0,750.1 482.9,749.4 482.8,748.7 482.7,748.0 482.6,747.3 482.4,746.5 482.3,745.8 482.2,745.0 482.1,744.3 482.0,743.6 481.8,742.8 481.7,742.0 481.6,741.3 481.5,740.5 481.4,739.7 481.3,738.9 481.2,738.2 481.1,737.4 480.9,736.6 480.8,735.8 480.7,735.0 480.6,734.2 480.5,733.3 480.4,732.5 480.3,731.7 480.2,730.9 480.1,730.0 480.0,729.2 479.9,728.3 479.8,727.5 479.7,726.6 479.6,725.7 479.5,724.9 479.4,724.0 479.3,723.1 479.2,722.2 479.1,721.3 479.0,720.4 478.9,719.5 478.8,718.6 478.7,717.7 478.6,716.7 478.5,715.8 478.4,714.8 478.3,713.9 478.3,712.9 478.2,712.0 478.1,711.0 478.0,710.0 477.9,709.0 477.9,708.0 477.8,707.0 477.7,706.0 477.6,705.0 477.5,704.0 477.4,702.9 477.4,701.9 477.3,700.9 477.2,699.8 477.1,698.8 477.0,697.7 476.9,696.6 476.8,695.6 476.7,694.5 476.6,693.4 476.5,692.3 476.4,691.3 476.3,690.2 476.2,689.1 476.1,688.0 476.0,686.8 475.8,685.7 475.7,684.6 475.6,683.5 475.5,682.3 475.4,681.2 475.2,680.0 475.1,678.9 475.0,677.7 474.9,676.5 474.7,675.3 474.6,674.1 474.5,672.9 474.3,671.7 474.2,670.5 474.1,669.3 473.9,668.0 473.8,666.8 473.7,665.5 473.5,664.2 473.4,662.9 473.2,661.7 473.1,660.4 473.0,659.0 472.8,657.7 472.7,656.4 472.5,655.1 472.3,653.7 472.2,652.3 472.0,651.0 471.9,649.6 471.7,648.2 471.5,646.8 471.4,645.4 471.2,644.0 471.0,642.5 470.9,641.1 470.7,639.6 470.5,638.1 470.3,636.6 470.1,635.1 469.9,633.6 469.8,632.1 469.6,630.5 469.4,628.9 469.2,627.4 469.0,625.8 468.8,624.1 468.6,622.5 468.4,620.9 468.2,619.2 468.0,617.6 467.7,615.9 467.5,614.2 467.3,612.4 467.1,610.7 466.8,608.9 466.6,607.2 466.4,605.4 466.1,603.6 465.9,601.8 465.6,599.9 465.3,598.1 465.1,596.2 464.8,594.3 464.5,592.4 464.2,590.4 463.9,588.5 463.6,586.5 463.3,584.5 462.9,582.5 462.6,580.5 462.3,578.4 461.9,576.3 461.5,574.2 461.2,572.1 460.8,570.0 460.4,567.8 460.0,565.6 459.5,563.4 459.1,561.2 458.7,558.9 458.2,556.7 457.8,554.3 457.3,552.0 456.8,549.6 456.3,547.2 455.8,544.8 455.3,542.3 454.8,539.8 454.2,537.3 453.7,534.7 453.1,532.1 452.6,529.5 452.0,526.8 451.4,524.1 450.8,521.4 450.1,518.6 449.5,515.8 448.8,512.9 448.1,510.0 447.4,507.1 446.7,504.1 445.9,501.1 445.2,498.1 444.4,495.0 443.6,491.8 442.8,488.6 442.0,485.3 441.1,482.0 440.3,478.7 439.4,475.3 438.5,471.8 437.7,468.2 436.8,464.6 435.9,460.9 435.0,457.2 434.1,453.4 433.2,449.5 432.3,445.5 431.4,441.5 430.4,437.4 429.5,433.3 428.5,429.0 427.6,424.7 426.6,420.3 425.6,415.8 424.7,411.2 423.7,406.6 422.8,401.8 421.8,397.0 420.9,392.0 420.0,386.9 419.1,381.7 418.3,376.4 417.5,370.9 416.5,365.3 415.7,359.5 414.8,353.6 414.0,347.6 413.3,341.3 412.7,334.9 412.1,328.3 411.6,321.5 411.3,314.5 411.2,307.3 411.1,299.9 411.1,292.2 411.2,284.4 411.4,276.2 411.7,267.9 412.0,259.3 412.5,250.4 413.2,241.2 414.0,231.7 415.0,221.8 416.1,211.6 417.3,201.0 418.8,190.1 420.5,178.6 422.8,166.8 425.3,154.4 428.2,141.5 431.4,128.1 434.9,114.0 438.9,99.3 443.3,83.8 448.2,67.6 453.6,50.5M541.5,751.6 541.5,750.9 541.5,750.1 541.5,749.4 541.5,748.7 541.5,748.0 541.5,747.3 541.5,746.5 541.5,745.8 541.5,745.0 541.5,744.3 541.5,743.6 541.5,742.8 541.5,742.0 541.5,741.3 541.5,740.5 541.5,739.7 541.5,738.9 541.5,738.2 541.6,737.4 541.6,736.6 541.6,735.8 541.6,735.0 541.6,734.2 541.7,733.3 541.7,732.5 541.7,731.7 541.8,730.9 541.8,730.0 541.8,729.2 541.9,728.3 541.9,727.5 542.0,726.6 542.0,725.7 542.0,724.9 542.1,724.0 542.1,723.1 542.2,722.2 542.2,721.3 542.3,720.4 542.4,719.5 542.4,718.6 542.5,717.7 542.6,716.7 542.6,715.8 542.7,714.8 542.8,713.9 542.9,712.9 543.0,712.0 543.1,711.0 543.1,710.0 543.2,709.0 543.3,708.0 543.4,707.0 543.5,706.0 543.6,705.0 543.7,704.0 543.8,702.9 543.9,701.9 544.0,700.9 544.2,699.8 544.3,698.8 544.4,697.7 544.5,696.6 544.6,695.6 544.7,694.5 544.8,693.4 544.9,692.3 545.0,691.3 545.1,690.2 545.2,689.1 545.3,688.0 545.4,686.8 545.5,685.7 545.6,684.6 545.8,683.5 545.9,682.3 546.0,681.2 546.1,680.0 546.2,678.9 546.3,677.7 546.4,676.5 546.6,675.3 546.7,674.1 546.8,672.9 546.9,671.7 547.1,670.5 547.2,669.3 547.3,668.0 547.5,666.8 547.6,665.5 547.8,664.2 547.9,662.9 548.1,661.7 548.2,660.4 548.4,659.0 548.5,657.7 548.7,656.4 548.8,655.1 549.0,653.7 549.1,652.3 549.3,651.0 549.5,649.6 549.6,648.2 549.8,646.8 550.0,645.4 550.2,644.0 550.3,642.5 550.5,641.1 550.7,639.6 550.9,638.1 551.1,636.6 551.3,635.1 551.5,633.6 551.7,632.1 551.9,630.5 552.1,628.9 552.3,627.4 552.6,625.8 552.8,624.1 553.0,622.5 553.3,620.9 553.5,619.2 553.7,617.6 554.0,615.9 554.2,614.2 554.5,612.4 554.7,610.7 555.0,608.9 555.3,607.2 555.5,605.4 555.8,603.6 556.1,601.8 556.3,599.9 556.6,598.1 556.9,596.2 557.2,594.3 557.5,592.4 557.8,590.4 558.1,588.5 558.3,586.5 558.6,584.5 558.9,582.5 559.2,580.5 559.6,578.4 559.9,576.3 560.2,574.2 560.5,572.1 560.8,570.0 561.1,567.8 561.4,565.6 561.7,563.4 562.1,561.2 562.4,558.9 562.7,556.7 563.1,554.3 563.4,552.0 563.7,549.6 564.1,547.2 564.4,544.8 564.8,542.3 565.2,539.8 565.5,537.3 565.9,534.7 566.3,532.1 566.7,529.5 567.0,526.8 567.4,524.1 567.8,521.4 568.2,518.6 568.6,515.8 569.0,512.9 569.4,510.0 569.8,507.1 570.2,504.1 570.5,501.1 570.9,498.1 571.3,495.0 571.7,491.8 572.0,488.6 572.4,485.3 572.8,482.0 573.2,478.7 573.6,475.3 574.0,471.8 574.4,468.2 574.8,464.6 575.2,460.9 575.6,457.2 576.1,453.4 576.5,449.5 576.9,445.5 577.3,441.5 577.7,437.4 578.1,433.3 578.5,429.0 578.9,424.7 579.3,420.3 579.6,415.8 580.0,411.2 580.3,406.6 580.6,401.8 581.0,397.0 581.3,392.0 581.6,386.9 581.9,381.7 582.2,376.4 582.4,370.9 582.5,365.3 582.7,359.5 582.8,353.6 582.8,347.6 582.9,341.3 583.0,334.9 583.1,328.3 583.3,321.5 583.5,314.5 583.8,307.3 584.1,299.9 584.4,292.2 584.7,284.4 585.0,276.2 585.3,267.9 585.6,259.3 585.9,250.4 586.2,241.2 586.6,231.7 587.0,221.8 587.5,211.6 588.0,201.0 588.6,190.1 589.4,178.6 590.7,166.8 592.2,154.4 593.9,141.5 595.9,128.1 598.1,114.0 600.6,99.3 603.5,83.8 606.9,67.6 610.6,50.5M600.4,751.6 600.5,750.9 600.5,750.1 600.6,749.4 600.7,748.7 600.7,748.0 600.8,747.3 600.9,746.5 600.9,745.8 601.0,745.0 601.1,744.3 601.2,743.6 601.2,742.8 601.3,742.0 601.4,741.3 601.5,740.5 601.6,739.7 601.7,738.9 601.8,738.2 601.9,737.4 602.0,736.6 602.1,735.8 602.2,735.0 602.3,734.2 602.4,733.3 602.5,732.5 602.6,731.7 602.8,730.9 602.9,730.0 603.0,729.2 603.1,728.3 603.3,727.5 603.4,726.6 603.5,725.7 603.7,724.9 603.8,724.0 604.0,723.1 604.1,722.2 604.3,721.3 604.4,720.4 604.6,719.5 604.8,718.6 604.9,717.7 605.1,716.7 605.3,715.8 605.4,714.8 605.6,713.9 605.8,712.9 606.0,712.0 606.2,711.0 606.4,710.0 606.6,709.0 606.8,708.0 607.0,707.0 607.2,706.0 607.4,705.0 607.7,704.0 607.9,702.9 608.1,701.9 608.3,700.9 608.5,699.8 608.8,698.8 609.0,697.7 609.2,696.6 609.5,695.6 609.7,694.5 609.9,693.4 610.2,692.3 610.4,691.3 610.6,690.2 610.9,689.1 611.1,688.0 611.3,686.8 611.6,685.7 611.8,684.6 612.1,683.5 612.3,682.3 612.6,681.2 612.9,680.0 613.1,678.9 613.4,677.7 613.6,676.5 613.9,675.3 614.2,674.1 614.5,672.9 614.8,671.7 615.0,670.5 615.3,669.3 615.6,668.0 615.9,666.8 616.2,665.5 616.6,664.2 616.9,662.9 617.2,661.7 617.5,660.4 617.8,659.0 618.2,657.7 618.5,656.4 618.8,655.1 619.2,653.7 619.5,652.3 619.9,651.0 620.2,649.6 620.6,648.2 621.0,646.8 621.3,645.4 621.7,644.0 622.1,642.5 622.5,641.1 622.9,639.6 623.3,638.1 623.7,636.6 624.1,635.1 624.6,633.6 625.0,632.1 625.4,630.5 625.9,628.9 626.3,627.4 626.8,625.8 627.3,624.1 627.7,622.5 628.2,620.9 628.7,619.2 629.2,617.6 629.7,615.9 630.2,614.2 630.7,612.4 631.3,610.7 631.8,608.9 632.4,607.2 632.9,605.4 633.5,603.6 634.0,601.8 634.6,599.9 635.2,598.1 635.8,596.2 636.4,594.3 637.0,592.4 637.6,590.4 638.3,588.5 638.9,586.5 639.6,584.5 640.2,582.5 640.9,580.5 641.5,578.4 642.2,576.3 642.9,574.2 643.6,572.1 644.3,570.0 645.0,567.8 645.8,565.6 646.5,563.4 647.3,561.2 648.0,558.9 648.8,556.7 649.6,554.3 650.4,552.0 651.2,549.6 652.1,547.2 652.9,544.8 653.8,542.3 654.7,539.8 655.6,537.3 656.5,534.7 657.4,532.1 658.4,529.5 659.3,526.8 660.3,524.1 661.3,521.4 662.3,518.6 663.4,515.8 664.4,512.9 665.5,510.0 666.6,507.1 667.7,504.1 668.8,501.1 670.0,498.1 671.2,495.0 672.4,491.8 673.6,488.6 674.8,485.3 676.1,482.0 677.4,478.7 678.7,475.3 680.1,471.8 681.5,468.2 682.9,464.6 684.4,460.9 685.9,457.2 687.5,453.4 689.0,449.5 690.7,445.5 692.3,441.5 694.0,437.4 695.7,433.3 697.4,429.0 699.2,424.7 701.0,420.3 702.9,415.8 704.8,411.2 706.7,406.6 708.7,401.8 710.8,397.0 712.9,392.0 715.0,386.9 717.2,381.7 719.5,376.4 721.8,370.9 724.2,365.3 726.7,359.5 729.3,353.6 732.0,347.6 734.7,341.3 737.5,334.9 740.5,328.3 743.5,321.5 746.7,314.5 749.9,307.3 753.3,299.9 756.7,292.2 760.3,284.4 763.9,276.2 767.7,267.9 771.6,259.3 775.6,250.4 779.7,241.2 783.9,231.7 788.3,221.8 792.8,211.6 797.5,201.0 802.3,190.1 807.3,178.6 812.4,166.8 817.7,154.4 823.2,141.5 828.8,128.1 834.7,114.0 840.7,99.3 846.9,83.8 853.3,67.6 860.0,50.5M659.8,751.6 659.9,750.9 660.0,750.1 660.1,749.4 660.2,748.7 660.3,748.0 660.4,747.3 660.5,746.5 660.6,745.8 660.7,745.0 660.9,744.3 661.0,743.6 661.1,742.8 661.2,742.0 661.4,741.3 661.5,740.5 661.6,739.7 661.8,738.9 661.9,738.2 662.1,737.4 662.2,736.6 662.4,735.8 662.5,735.0 662.7,734.2 662.8,733.3 663.0,732.5 663.2,731.7 663.3,730.9 663.5,730.0 663.7,729.2 663.9,728.3 664.0,727.5 664.2,726.6 664.4,725.7 664.6,724.9 664.8,724.0 665.0,723.1 665.2,722.2 665.4,721.3 665.6,720.4 665.8,719.5 666.0,718.6 666.3,717.7 666.5,716.7 666.7,715.8 666.9,714.8 667.2,713.9 667.4,712.9 667.7,712.0 667.9,711.0 668.2,710.0 668.4,709.0 668.7,708.0 669.0,707.0 669.3,706.0 669.5,705.0 669.8,704.0 670.1,702.9 670.4,701.9 670.7,700.9 670.9,699.8 671.2,698.8 671.5,697.7 671.8,696.6 672.1,695.6 672.4,694.5 672.7,693.4 673.0,692.3 673.3,691.3 673.6,690.2 673.9,689.1 674.2,688.0 674.5,686.8 674.9,685.7 675.2,684.6 675.5,683.5 675.8,682.3 676.2,681.2 676.5,680.0 676.8,678.9 677.2,677.7 677.5,676.5 677.9,675.3 678.2,674.1 678.6,672.9 678.9,671.7 679.3,670.5 679.7,669.3 680.1,668.0 680.4,666.8 680.8,665.5 681.2,664.2 681.6,662.9 682.0,661.7 682.5,660.4 682.9,659.0 683.3,657.7 683.7,656.4 684.1,655.1 684.6,653.7 685.0,652.3 685.5,651.0 685.9,649.6 686.4,648.2 686.9,646.8 687.3,645.4 687.8,644.0 688.3,642.5 688.8,641.1 689.3,639.6 689.8,638.1 690.3,636.6 690.8,635.1 691.4,633.6 691.9,632.1 692.5,630.5 693.0,628.9 693.6,627.4 694.2,625.8 694.8,624.1 695.4,622.5 696.0,620.9 696.6,619.2 697.2,617.6 697.8,615.9 698.5,614.2 699.1,612.4 699.8,610.7 700.5,608.9 701.1,607.2 701.8,605.4 702.5,603.6 703.2,601.8 704.0,599.9 704.7,598.1 705.4,596.2 706.2,594.3 706.9,592.4 707.7,590.4 708.5,588.5 709.3,586.5 710.1,584.5 710.9,582.5 711.7,580.5 712.6,578.4 713.4,576.3 714.3,574.2 715.2,572.1 716.1,570.0 717.0,567.8 717.9,565.6 718.8,563.4 719.7,561.2 720.7,558.9 721.7,556.7 722.7,554.3 723.7,552.0 724.7,549.6 725.8,547.2 726.8,544.8 727.9,542.3 729.0,539.8 730.1,537.3 731.3,534.7 732.5,532.1 733.7,529.5 734.9,526.8 736.1,524.1 737.4,521.4 738.7,518.6 740.0,515.8 741.3,512.9 742.6,510.0 744.0,507.1 745.4,504.1 746.8,501.1 748.3,498.1 749.8,495.0 751.3,491.8 752.8,488.6 754.4,485.3 756.0,482.0 757.7,478.7 759.4,475.3 761.1,471.8 762.9,468.2 764.7,464.6 766.6,460.9 768.5,457.2 770.4,453.4 772.4,449.5 774.5,445.5 776.6,441.5 778.7,437.4 780.9,433.3 783.1,429.0 785.4,424.7 787.8,420.3 790.2,415.8 792.6,411.2 795.1,406.6 797.7,401.8 800.4,397.0 803.1,392.0 805.9,386.9 808.8,381.7 811.8,376.4 814.8,370.9 818.0,365.3 821.3,359.5 824.6,353.6 828.1,347.6 831.8,341.3 835.5,334.9 839.4,328.3 843.5,321.5 847.7,314.5 852.0,307.3 856.5,299.9 861.2,292.2 866.0,284.4 871.0,276.2 876.1,267.9 881.5,259.3 887.0,250.4 892.8,241.2 898.8,231.7 905.1,221.8 911.6,211.6 918.3,201.0 925.4,190.1 932.8,178.6 940.5,166.8 948.6,154.4 957.0,141.5 965.9,128.1 975.3,114.0 985.1,99.3 995.5,83.8 1006.4,67.6 1018.0,50.5"/>
<path stroke="#006400" d="M121.5,50 V749M181.5,50 V749M241.5,50 V749M301.5,50 V749M361.5,50 V749M421.5,50 V749M481.5,50 V749M541.5,50 V749M601.5,50 V749"/>
<path stroke="#fff" d="M-678.5,760.5 L61.5,20.5M-618.5,760.5 L121.5,20.5M-558.5,760.5 L181.5,20.5M-498.5,760.5 L241.5,20.5M-438.5,760.5 L301.5,20.5M-378.5,760.5 L361.5,20.5M-318.5,760.5 L421.5,20.5M-258.5,760.5 L481.5,20.5M-198.5,760.5 L541.5,20.5M-138.5,760.5 L601.5,20.5M-78.5,760.5 L661.5,20.5M-18.5,760.5 L721.5,20.5M41.5,760.5 L781.5,20.5M101.5,760.5 L841.5,20.5M161.5,760.5 L901.5,20.5M221.5,760.5 L961.5,20.5M281.5,760.5 L1021.5,20.5M341.5,760.5 L1081.5,20.5M401.5,760.5 L1141.5,20.5M461.5,760.5 L1201.5,20.5M521.5,760.5 L1261.5,20.5M581.5,760.5 L1321.5,20.5M641.5,760.5 L1381.5,20.5"/>
<path stroke="#fff" d="M61,321.5 H661M61,449.5 H661M61,529.5 H661M61,586.5 H661M61,630.5 H661M61,665.5 H661M61,694.5 H661M61,719.5 H661M61,740.5 H661"/>
<path stroke="#fff" d="M658.0,92.5h5M660.5,90.0v5M642.0,126.5h5M644.5,124.0v5M637.0,140.5h5M639.5,138.0v5M581.0,200.5h5M583.5,198.0v5M571.0,218.5h5M573.5,216.0v5M529.0,268.5h5M531.5,266.0v5M524.0,274.5h5M526.5,272.0v5M480.0,300.5h5M482.5,298.0v5M460.0,321.5h5M462.5,319.0v5M459.0,322.5h5M461.5,320.0v5M433.0,340.5h5M435.5,338.0v5M409.0,357.5h5M411.5,355.0v5M409.0,366.5h5M411.5,364.0v5M409.0,368.5h5M411.5,366.0v5M401.0,379.5h5M403.5,377.0v5M393.0,391.5h5M395.5,389.0v5M393.0,394.5h5M395.5,392.0v5M394.0,419.5h5M396.5,417.0v5M397.0,428.5h5M399.5,426.0v5M397.0,430.5h5M399.5,428.0v5M399.0,440.5h5M401.5,438.0v5M400.0,445.5h5M402.5,443.0v5M401.0,449.5h5M403.5,447.0v5M417.0,502.5h5M419.5,500.0v5M420.0,513.5h5M422.5,511.0v5M424.0,529.5h5M426.5,527.0v5M425.0,533.5h5M427.5,531.0v5M429.0,553.5h5M431.5,551.0v5M434.0,568.5h5M436.5,566.0v5M434.0,569.5h5M436.5,567.0v5M442.0,583.5h5M444.5,581.0v5M442.0,584.5h5M444.5,582.0v5M441.0,585.5h5M443.5,583.0v5M441.0,587.5h5M443.5,585.0v5M441.0,595.5h5M443.5,593.0v5M442.0,599.5h5M444.5,597.0v5M439.0,600.5h5M441.5,598.0v5M433.0,601.5h5M435.5,599.0v5M429.0,604.5h5M431.5,602.0v5M428.0,607.5h5M430.5,605.0v5M431.0,615.5h5M433.5,613.0v5M431.0,616.5h5M433.5,614.0v5M432.0,619.5h5M434.5,617.0v5M432.0,620.5h5M434.5,618.0v5M432.0,623.5h5M434.5,621.0v5M442.0,643.5h5M444.5,641.0v5M460.0,665.5h5M462.5,663.0v5M480.0,684.5h5M482.5,682.0v5M484.0,689.5h5M486.5,687.0v5M487.0,697.5h5M489.5,695.0v5M487.0,700.5h5M489.5,698.0v5M487.0,701.5h5M489.5,699.0v5M486.0,706.5h5M488.5,704.0v5M486.0,706.5h5M488.5,704.0v5M486.0,707.5h5M488.5,705.0v5M509.0,725.5h5M511.5,723.0v5M518.0,731.5h5M520.5,729.0v5M527.0,731.5h5M529.5,729.0v5M532.0,50.5h5M534.5,48.0v5M519.0,62.5h5M521.5,60.0v5M504.0,80.5h5M506.5,78.0v5M495.0,92.5h5M497.5,90.0v5M468.0,126.5h5M470.5,124.0v5M454.0,140.5h5M456.5,138.0v5M401.0,200.5h5M403.5,198.0v5M387.0,218.5h5M389.5,216.0v5M344.0,268.5h5M346.5,266.0v5M340.0,274.5h5M342.5,272.0v5M314.0,300.5h5M316.5,298.0v5M316.0,321.5h5M318.5,319.0v5M316.0,322.5h5M318.5,320.0v5M305.0,340.5h5M307.5,338.0v5M338.0,357.5h5M340.5,355.0v5M331.0,366.5h5M333.5,364.0v5M329.0,368.5h5M331.5,366.0v5M334.0,379.5h5M336.5,377.0v5M359.0,391.5h5M361.5,389.0v5M364.0,394.5h5M366.5,392.0v5M369.0,419.5h5M371.5,417.0v5M351.0,428.5h5M353.5,426.0v5M373.0,430.5h5M375.5,428.0v5M364.0,440.5h5M366.5,438.0v5M398.0,445.5h5M400.5,443.0v5M397.0,449.5h5M399.5,447.0v5M380.0,502.5h5M382.5,500.0v5M387.0,513.5h5M389.5,511.0v5M389.0,529.5h5M391.5,527.0v5M391.0,533.5h5M393.5,531.0v5M408.0,553.5h5M410.5,551.0v5M376.0,568.5h5M378.5,566.0v5M370.0,569.5h5M372.5,567.0v5M344.0,583.5h5M346.5,581.0v5M282.0,584.5h5M284.5,582.0v5M303.0,585.5h5M305.5,583.0v5M293.0,587.5h5M295.5,585.0v5M237.0,595.5h5M239.5,593.0v5M288.0,599.5h5M290.5,597.0v5M312.0,600.5h5M314.5,598.0v5M397.0,601.5h5M399.5,599.0v5M416.0,604.5h5M418.5,602.0v5M426.0,607.5h5M428.5,605.0v5M399.0,615.5h5M401.5,613.0v5M422.0,616.5h5M424.5,614.0v5M399.0,619.5h5M401.5,617.0v5M402.0,620.5h5M404.5,618.0v5M430.0,623.5h5M432.5,621.0v5M423.0,643.5h5M425.5,641.0v5M426.0,665.5h5M428.5,663.0v5M412.0,684.5h5M414.5,682.0v5M433.0,689.5h5M435.5,687.0v5M442.0,697.5h5M444.5,695.0v5M438.0,700.5h5M440.5,698.0v5M439.0,701.5h5M441.5,699.0v5M457.0,706.5h5M459.5,704.0v5M463.0,706.5h5M465.5,704.0v5M468.0,707.5h5M470.5,705.0v5M460.0,725.5h5M462.5,723.0v5M458.0,731.5h5M460.5,729.0v5M457.0,731.5h5M459.5,729.0v5M203.0,50.5h5M205.5,48.0v5M191.0,62.5h5M193.5,60.0v5M221.0,80.5h5M223.5,78.0v5M227.0,92.5h5M229.5,90.0v5M197.0,126.5h5M199.5,124.0v5M257.0,140.5h5M259.5,138.0v5M359.0,200.5h5M361.5,198.0v5M323.0,218.5h5M325.5,216.0v5M305.0,268.5h5M307.5,266.0v5M293.0,274.5h5M295.5,272.0v5M341.0,300.5h5M343.5,298.0v5M311.0,321.5h5M313.5,319.0v5M305.0,322.5h5M307.5,320.0v5M329.0,340.5h5M331.5,338.0v5M311.0,357.5h5M313.5,355.0v5M287.0,366.5h5M289.5,364.0v5M293.0,368.5h5M295.5,366.0v5M347.0,379.5h5M349.5,377.0v5M383.0,391.5h5M385.5,389.0v5M377.0,394.5h5M379.5,392.0v5M359.0,419.5h5M361.5,417.0v5M353.0,428.5h5M355.5,426.0v5M341.0,430.5h5M343.5,428.0v5M317.0,440.5h5M319.5,438.0v5M305.0,445.5h5M307.5,443.0v5M293.0,449.5h5M295.5,447.0v5M281.0,502.5h5M283.5,500.0v5M269.0,513.5h5M271.5,511.0v5M287.0,529.5h5M289.5,527.0v5M287.0,533.5h5M289.5,531.0v5M263.0,553.5h5M265.5,551.0v5M227.0,568.5h5M229.5,566.0v5M221.0,569.5h5M223.5,567.0v5M263.0,583.5h5M265.5,581.0v5M269.0,584.5h5M271.5,582.0v5M269.0,585.5h5M271.5,583.0v5M269.0,587.5h5M271.5,585.0v5M239.0,595.5h5M241.5,593.0v5M221.0,599.5h5M223.5,597.0v5M215.0,600.5h5M217.5,598.0v5M203.0,601.5h5M205.5,599.0v5M185.0,604.5h5M187.5,602.0v5M185.0,607.5h5M187.5,605.0v5M185.0,615.5h5M187.5,613.0v5M173.0,616.5h5M175.5,614.0v5M155.0,619.5h5M157.5,617.0v5M161.0,620.5h5M163.5,618.0v5M167.0,623.5h5M169.5,621.0v5M203.0,643.5h5M205.5,641.0v5M257.0,665.5h5M259.5,663.0v5M245.0,684.5h5M247.5,682.0v5M233.0,689.5h5M235.5,687.0v5M191.0,697.5h5M193.5,695.0v5M185.0,700.5h5M187.5,698.0v5M173.0,701.5h5M175.5,699.0v5M131.0,706.5h5M133.5,704.0v5M119.0,706.5h5M121.5,704.0v5M113.0,707.5h5M115.5,705.0v5M83.0,725.5h5M85.5,723.0v5M77.0,731.5h5M79.5,729.0v5M71.0,731.5h5M73.5,729.0v5M167.0,50.5h5M169.5,48.0v5M152.0,62.5h5M154.5,60.0v5M200.0,80.5h5M202.5,78.0v5M200.0,92.5h5M202.5,90.0v5M119.0,126.5h5M121.5,124.0v5M160.0,140.5h5M162.5,138.0v5M272.0,200.5h5M274.5,198.0v5M240.0,218.5h5M242.5,216.0v5M235.0,268.5h5M237.5,266.0v5M215.0,274.5h5M217.5,272.0v5M241.0,300.5h5M243.5,298.0v5M246.0,321.5h5M248.5,319.0v5M240.0,322.5h5M242.5,320.0v5M224.0,340.5h5M226.5,338.0v5M200.0,357.5h5M202.5,355.0v5M176.0,366.5h5M178.5,364.0v5M179.0,368.5h5M181.5,366.0v5M231.0,379.5h5M233.5,377.0v5M273.0,391.5h5M275.5,389.0v5M267.0,394.5h5M269.5,392.0v5M252.0,419.5h5M254.5,417.0v5M248.0,428.5h5M250.5,426.0v5M235.0,430.5h5M237.5,428.0v5M210.0,440.5h5M212.5,438.0v5M202.0,445.5h5M204.5,443.0v5M188.0,449.5h5M190.5,447.0v5M175.0,502.5h5M177.5,500.0v5M166.0,513.5h5M168.5,511.0v5M167.0,529.5h5M169.5,527.0v5M167.0,533.5h5M169.5,531.0v5M152.0,553.5h5M154.5,551.0v5M111.0,568.5h5M113.5,566.0v5M106.0,569.5h5M108.5,567.0v5M154.0,583.5h5M156.5,581.0v5M156.0,584.5h5M158.5,582.0v5M159.0,585.5h5M161.5,583.0v5M158.0,587.5h5M160.5,585.0v5M129.0,595.5h5M131.5,593.0v5M123.0,599.5h5M125.5,597.0v5M122.0,600.5h5M124.5,598.0v5M119.0,601.5h5M121.5,599.0v5M120.0,604.5h5M122.5,602.0v5M110.0,607.5h5M112.5,605.0v5M125.0,615.5h5M127.5,613.0v5M122.0,616.5h5M124.5,614.0v5M110.0,619.5h5M112.5,617.0v5M106.0,620.5h5M108.5,618.0v5M101.0,623.5h5M103.5,621.0v5M125.0,643.5h5M127.5,641.0v5M182.0,665.5h5M184.5,663.0v5M162.0,684.5h5M164.5,682.0v5M159.0,689.5h5M161.5,687.0v5M132.0,697.5h5M134.5,695.0v5M116.0,700.5h5M118.5,698.0v5M112.0,701.5h5M114.5,699.0v5M120.0,706.5h5M122.5,704.0v5M124.0,706.5h5M126.5,704.0v5M129.0,707.5h5M131.5,705.0v5M172.0,725.5h5M174.5,723.0v5M185.0,731.5h5M187.5,729.0v5M196.0,731.5h5M198.5,729.0v5M60.0,665.5h5M62.5,663.0v5M72.0,689.5h5M74.5,687.0v5M84.0,697.5h5M86.5,695.0v5M72.0,700.5h5M74.5,698.0v5M274.0,707.5h5M276.5,705.0v5M285.0,707.5h5M287.5,705.0v5M315.0,725.5h5M317.5,723.0v5M321.0,731.5h5M323.5,729.0v5M343.0,731.5h5M345.5,729.0v5M74.0,665.5h5M76.5,663.0v5M83.0,689.5h5M85.5,687.0v5M132.0,696.5h5M134.5,694.0v5M174.0,703.5h5M176.5,701.0v5M174.0,706.5h5M176.5,704.0v5M129.0,707.5h5M131.5,705.0v5M121.0,725.5h5M123.5,723.0v5M122.0,731.5h5M124.5,729.0v5M99.0,731.5h5M101.5,729.0v5M209.0,731.5h5M211.5,729.0v5M205.0,731.5h5M207.5,729.0v5M188.0,725.5h5M190.5,723.0v5M252.0,700.5h5M254.5,698.0v5M251.0,697.5h5M253.5,695.0v5M280.0,689.5h5M282.5,687.0v5M289.0,664.5h5M291.5,662.0v5"/>
<polyline stroke="#f07800" points="61.7,643.8 76.7,665.5 62.3,683.1 85.5,689.6 111.2,693.7 134.1,696.9 169.8,699.7 176.2,703.0 176.2,706.5 131.1,707.7 123.5,725.3 124.7,731.2 101.3,731.2" />
<polyline stroke="#ff0" points="62.0,665.5 62.0,674.0" />
<polyline stroke="#ff0" points="62.3,683.7 86.6,697.2 74.3,700.1 113.6,702.4 151.0,705.4 176.0,706.3 276.6,707.7 287.8,707.7 317.6,725.2 323.5,731.2 345.9,731.2" />
<polyline stroke="#c8c800" points="211.4,731.2 207.5,731.2 190.3,725.2 218.7,707.6 254.0,700.6 253.2,697.4 282.5,689.8 298.3,682.4 297.1,678.7 295.4,671.6 291.3,664.4 286.0,658.7 282.5,654.6" />
<polyline stroke="#ff0080" points="169.5,50.5 154.2,62.3 202.7,80.4 202.7,92.6 121.4,126.5 162.6,140.5 274.3,200.3 242.3,218.2 237.6,268.6 217.5,274.2 243.1,300.4 248.2,321.6 242.6,322.7 226.4,340.4 202.9,357.1 178.5,366.2 181.9,368.0 233.6,379.0 275.0,391.0 269.1,394.0 254.3,419.4 250.9,428.6 237.5,430.4 212.2,440.5 204.6,445.5 190.8,449.3 177.4,502.6 168.7,513.3 169.3,529.3 169.5,533.3 154.0,553.4 113.9,568.2 108.5,569.4 156.0,583.4 158.5,584.9 161.1,585.9 160.0,587.2 131.9,595.0 125.7,599.7 124.0,600.2 121.5,601.3 122.4,604.6 112.8,607.6 127.1,615.6 124.0,616.1 112.8,619.8 108.0,620.6 103.5,623.2 127.4,643.6 184.3,665.5 164.4,684.4 161.4,689.0 134.1,697.0 118.0,700.4 114.8,701.1 122.0,706.3 126.0,706.6 131.6,707.2 174.9,725.2 187.2,731.2 198.1,731.2" />
<polyline stroke="#0f0" points="205.5,50.5 193.5,62.3 223.5,80.4 229.5,92.6 199.5,126.5 259.5,140.5 361.5,200.3 325.5,218.2 307.5,268.6 295.5,274.2 343.5,300.4 313.5,321.6 307.5,322.7 331.5,340.4 313.5,357.1 289.5,366.2 295.5,368.0 349.5,379.0 385.5,391.0 379.5,394.0 361.5,419.4 355.5,428.6 343.5,430.4 319.5,440.5 307.5,445.5 295.5,449.3 283.5,502.6 271.5,513.3 289.5,529.3 289.5,533.3 265.5,553.4 229.5,568.2 223.5,569.4 265.5,583.4 271.5,584.9 271.5,585.9 271.5,587.2 241.5,595.0 223.5,599.7 217.5,600.2 205.5,601.3 187.5,604.6 187.5,607.6 187.5,615.6 175.5,616.1 157.5,619.8 163.5,620.6 169.5,623.2 205.5,643.6 259.5,665.5 247.5,684.4 235.5,689.0 193.5,697.0 187.5,700.4 175.5,701.1 133.5,706.3 121.5,706.6 115.5,707.2 85.5,725.2 79.5,731.2 73.5,731.2" />
<polyline stroke="#0ff" points="534.1,50.5 521.4,62.3 506.6,80.4 497.4,92.6 470.4,126.5 456.3,140.5 403.2,200.3 389.3,218.2 346.4,268.6 342.5,274.2 316.5,300.4 318.9,321.6 318.3,322.7 307.9,340.4 340.2,357.1 333.4,366.2 331.4,368.0 336.8,379.0 361.2,391.0 366.8,394.0 371.8,419.4 353.6,428.6 375.5,430.4 366.3,440.5 400.3,445.5 399.5,449.3 382.5,502.6 389.3,513.3 391.5,529.3 393.1,533.3 410.4,553.4 378.6,568.2 372.0,569.4 346.2,583.4 284.0,584.9 305.0,585.9 295.2,587.2 239.5,595.0 290.5,599.7 314.4,600.2 399.3,601.3 418.7,604.6 428.5,607.6 401.9,615.6 424.6,616.1 401.0,619.8 404.4,620.6 432.3,623.2 425.6,643.6 428.4,665.5 414.6,684.4 435.7,689.0 444.1,697.0 440.7,700.4 441.5,701.1 459.2,706.3 465.0,706.6 470.2,707.2 462.3,725.2 460.0,731.2 459.2,731.2" />
<polyline stroke="#f00" points="672.0,80.4 660.6,92.6 644.4,126.5 639.6,140.5 583.4,200.3 573.3,218.2 531.1,268.6 526.8,274.2 482.5,300.4 462.6,321.6 461.5,322.7 435.3,340.4 411.8,357.1 411.8,366.2 411.8,368.0 403.2,379.0 395.6,391.0 395.6,394.0 396.6,419.4 399.6,428.6 399.9,430.4 401.2,440.5 402.3,445.5 403.7,449.3 419.2,502.6 422.6,513.3 426.3,529.3 427.7,533.3 431.9,553.4 436.0,568.2 436.4,569.4 444.7,583.4 444.0,584.9 443.6,585.9 443.6,587.2 443.6,595.0 444.3,599.7 441.0,600.2 435.5,601.3 431.4,604.6 430.3,607.6 433.6,615.6 433.8,616.1 434.8,619.8 434.8,620.6 434.8,623.2 444.1,643.6 462.9,665.5 482.0,684.4 486.2,689.0 489.5,697.0 489.5,700.4 489.5,701.1 488.7,706.3 488.7,706.6 488.9,707.2 511.4,725.2 520.7,731.2 529.9,731.2" />
<polyline stroke="#ffb0ff" points="469.6,50.5 465.9,65.2 461.7,80.4 457.8,95.5 454.1,109.0 450.7,122.5 447.7,135.9 444.8,149.4 441.5,166.2 438.1,183.1 435.6,203.3 433.3,214.5 430.7,242.7 430.2,269.6 429.3,300.0 430.3,316.8 432.6,340.4 434.8,360.6 437.4,379.1 440.7,399.3 444.1,417.9 447.5,434.7 450.8,449.9 454.6,466.9 459.7,490.5 463.9,505.6 466.4,524.1 469.8,541.0 472.3,559.5 475.1,578.0 477.3,593.2 478.2,604.1 480.3,622.1 483.1,647.3 484.5,677.6 485.3,687.7 548.5,731.2" />
<polyline stroke="#f0f" points="454.1,50.5 449.9,66.9 444.8,82.0 439.8,98.9 434.7,115.7 430.5,132.6 426.3,149.4 422.9,166.2 419.9,183.1 417.4,203.3 412.8,235.0 410.7,269.6 410.4,300.0 411.3,316.8 412.9,342.1 414.1,357.2 418.0,380.8 420.5,397.7 424.2,416.2 428.1,434.7 432.3,451.5 435.2,461.8 440.3,483.7 446.2,505.6 451.2,528.9 455.4,549.4 459.7,569.6 463.0,586.4 465.5,604.1 469.3,622.1 472.7,652.4 475.2,674.3 476.9,687.7 477.7,700.4 520.7,731.2" />
<polyline stroke="#f0f" points="477.7,700.4 460.1,731.5" />
<path stroke="#f0f" d="M61,700.5H626"/>
<rect x="215" y="704" width="7" height="7" fill="#c8c800" stroke="none"/>
<rect x="295" y="679" width="7" height="7" fill="#c8c800" stroke="none"/>
<rect x="279" y="651" width="7" height="7" fill="#c8c800" stroke="none"/>
</g>
<rect x="61.5" y="50.5" width="600" height="699" stroke="#fff"/>
<path stroke="#fff" d="M56,50.5 H61M56,321.5 H61M56,449.5 H61M56,529.5 H61M56,586.5 H61M56,630.5 H61M56,665.5 H61M56,694.5 H61M56,719.5 H61M56,740.5 H61M661,50.5 H667M661,321.5 H667M661,449.5 H667M661,529.5 H667M661,586.5 H667M661,630.5 H667M661,665.5 H667M661,694.5 H667M661,719.5 H667M61.5,749 V754M61.5,788 V792M61.5,826 V830M121.5,749 V754M121.5,788 V792M121.5,826 V830M181.5,749 V754M181.5,788 V792M181.5,826 V830M241.5,749 V754M241.5,788 V792M241.5,826 V830M301.5,749 V754M301.5,788 V792M301.5,826 V830M361.5,749 V754M361.5,788 V792M361.5,826 V830M421.5,749 V754M421.5,788 V792M421.5,826 V830M481.5,749 V754M481.5,788 V792M481.5,826 V830M541.5,749 V754M541.5,788 V792M541.5,826 V830M601.5,749 V754M601.5,788 V792M601.5,826 V830M661.5,749 V754M661.5,788 V792M661.5,826 V830M61.5,863 V867M136.5,863 V867M211.5,863 V867M286.5,863 V867M361.5,863 V867M436.5,863 V867M511.5,863 V867M586.5,863 V867M661.5,863 V867"/>
</g>
<defs><filter id="th" x="-5%" y="-20%" width="110%" height="140%" color-interpolation-filters="sRGB"><feComponentTransfer><feFuncA type="discrete" tableValues="0 1"/></feComponentTransfer></filter></defs>
<text x="63.0" y="29.0" font-weight="bold" style="font-size:16px" textLength="240.5" lengthAdjust="spacing">Station: 06610 Payerne (LSMP)</text>
<text x="330.0" y="29.0" font-weight="bold" style="font-size:16px" textLength="127.5" lengthAdjust="spacing">Date: 30.06.2022</text>
<text x="479.0" y="29.0" font-weight="bold" style="font-size:16px" textLength="92.5" lengthAdjust="spacing">Time: 1200Z</text>
<g filter="url(#th)">
<text x="53.0" y="54.5" text-anchor="end" textLength="20.5" lengthAdjust="spacingAndGlyphs">100</text>
<text x="53.0" y="325.5" text-anchor="end" textLength="20.5" lengthAdjust="spacingAndGlyphs">200</text>
<text x="53.0" y="453.5" text-anchor="end" textLength="20.5" lengthAdjust="spacingAndGlyphs">300</text>
<text x="53.0" y="533.5" text-anchor="end" textLength="20.5" lengthAdjust="spacingAndGlyphs">400</text>
<text x="53.0" y="590.5" text-anchor="end" textLength="20.5" lengthAdjust="spacingAndGlyphs">500</text>
<text x="53.0" y="634.5" text-anchor="end" textLength="20.5" lengthAdjust="spacingAndGlyphs">600</text>
<text x="53.0" y="669.5" text-anchor="end" textLength="20.5" lengthAdjust="spacingAndGlyphs">700</text>
<text x="53.0" y="698.5" text-anchor="end" textLength="20.5" lengthAdjust="spacingAndGlyphs">800</text>
<text x="53.0" y="723.5" text-anchor="end" textLength="20.5" lengthAdjust="spacingAndGlyphs">900</text>
<text x="53.0" y="744.5" text-anchor="end" textLength="27.5" lengthAdjust="spacingAndGlyphs">1000</text>
<text x="670.5" y="54.5" textLength="45.0" lengthAdjust="spacingAndGlyphs">16540m</text>
<text x="670.5" y="325.5" textLength="45.0" lengthAdjust="spacingAndGlyphs">12093m</text>
<text x="670.5" y="453.5" textLength="37.5" lengthAdjust="spacingAndGlyphs">9452m</text>
<text x="670.5" y="533.5" textLength="37.5" lengthAdjust="spacingAndGlyphs">7428m</text>
<text x="670.5" y="590.5" textLength="37.5" lengthAdjust="spacingAndGlyphs">5761m</text>
<text x="670.5" y="634.5" textLength="37.5" lengthAdjust="spacingAndGlyphs">4350m</text>
<text x="670.5" y="669.5" textLength="37.5" lengthAdjust="spacingAndGlyphs">3118m</text>
<text x="670.5" y="698.5" textLength="37.5" lengthAdjust="spacingAndGlyphs">2010m</text>
<text x="670.5" y="723.5" textLength="37.5" lengthAdjust="spacingAndGlyphs">1005m</text>
<text transform="translate(58.5 767.5) scale(0.935 1)" text-anchor="middle" style="font-size:13.9px" textLength="18.7" lengthAdjust="spacingAndGlyphs">-50</text>
<text transform="translate(61.5 806.0) scale(0.935 1)" text-anchor="middle" style="font-size:13.9px" textLength="7.2" lengthAdjust="spacingAndGlyphs">0</text>
<text transform="translate(61.5 843.0) scale(0.935 1)" text-anchor="middle" style="font-size:13.9px" textLength="7.2" lengthAdjust="spacingAndGlyphs">0</text>
<text transform="translate(118.5 767.5) scale(0.935 1)" text-anchor="middle" style="font-size:13.9px" textLength="18.7" lengthAdjust="spacingAndGlyphs">-40</text>
<text transform="translate(121.5 806.0) scale(0.935 1)" text-anchor="middle" style="font-size:13.9px" textLength="14.4" lengthAdjust="spacingAndGlyphs">10</text>
<text transform="translate(121.5 843.0) scale(0.935 1)" text-anchor="middle" style="font-size:13.9px" textLength="21.6" lengthAdjust="spacingAndGlyphs">300</text>
<text transform="translate(178.5 767.5) scale(0.935 1)" text-anchor="middle" style="font-size:13.9px" textLength="18.7" lengthAdjust="spacingAndGlyphs">-30</text>
<text transform="translate(181.5 806.0) scale(0.935 1)" text-anchor="middle" style="font-size:13.9px" textLength="14.4" lengthAdjust="spacingAndGlyphs">20</text>
<text transform="translate(181.5 843.0) scale(0.935 1)" text-anchor="middle" style="font-size:13.9px" textLength="21.6" lengthAdjust="spacingAndGlyphs">600</text>
<text transform="translate(238.5 767.5) scale(0.935 1)" text-anchor="middle" style="font-size:13.9px" textLength="18.7" lengthAdjust="spacingAndGlyphs">-20</text>
<text transform="translate(241.5 806.0) scale(0.935 1)" text-anchor="middle" style="font-size:13.9px" textLength="14.4" lengthAdjust="spacingAndGlyphs">30</text>
<text transform="translate(241.5 843.0) scale(0.935 1)" text-anchor="middle" style="font-size:13.9px" textLength="21.6" lengthAdjust="spacingAndGlyphs">900</text>
<text transform="translate(298.5 767.5) scale(0.935 1)" text-anchor="middle" style="font-size:13.9px" textLength="18.7" lengthAdjust="spacingAndGlyphs">-10</text>
<text transform="translate(301.5 806.0) scale(0.935 1)" text-anchor="middle" style="font-size:13.9px" textLength="14.4" lengthAdjust="spacingAndGlyphs">40</text>
<text transform="translate(301.5 843.0) scale(0.935 1)" text-anchor="middle" style="font-size:13.9px" textLength="28.8" lengthAdjust="spacingAndGlyphs">1200</text>
<text transform="translate(361.5 767.5) scale(0.935 1)" text-anchor="middle" style="font-size:13.9px" textLength="7.2" lengthAdjust="spacingAndGlyphs">0</text>
<text transform="translate(361.5 806.0) scale(0.935 1)" text-anchor="middle" style="font-size:13.9px" textLength="14.4" lengthAdjust="spacingAndGlyphs">50</text>
<text transform="translate(361.5 843.0) scale(0.935 1)" text-anchor="middle" style="font-size:13.9px" textLength="28.8" lengthAdjust="spacingAndGlyphs">1500</text>
<text transform="translate(421.5 767.5) scale(0.935 1)" text-anchor="middle" style="font-size:13.9px" textLength="14.4" lengthAdjust="spacingAndGlyphs">10</text>
<text transform="translate(421.5 806.0) scale(0.935 1)" text-anchor="middle" style="font-size:13.9px" textLength="14.4" lengthAdjust="spacingAndGlyphs">60</text>
<text transform="translate(421.5 843.0) scale(0.935 1)" text-anchor="middle" style="font-size:13.9px" textLength="28.8" lengthAdjust="spacingAndGlyphs">1800</text>
<text transform="translate(481.5 767.5) scale(0.935 1)" text-anchor="middle" style="font-size:13.9px" textLength="14.4" lengthAdjust="spacingAndGlyphs">20</text>
<text transform="translate(481.5 806.0) scale(0.935 1)" text-anchor="middle" style="font-size:13.9px" textLength="14.4" lengthAdjust="spacingAndGlyphs">70</text>
<text transform="translate(481.5 843.0) scale(0.935 1)" text-anchor="middle" style="font-size:13.9px" textLength="28.8" lengthAdjust="spacingAndGlyphs">2100</text>
<text transform="translate(541.5 767.5) scale(0.935 1)" text-anchor="middle" style="font-size:13.9px" textLength="14.4" lengthAdjust="spacingAndGlyphs">30</text>
<text transform="translate(541.5 806.0) scale(0.935 1)" text-anchor="middle" style="font-size:13.9px" textLength="14.4" lengthAdjust="spacingAndGlyphs">80</text>
<text transform="translate(541.5 843.0) scale(0.935 1)" text-anchor="middle" style="font-size:13.9px" textLength="28.8" lengthAdjust="spacingAndGlyphs">2400</text>
<text transform="translate(601.5 767.5) scale(0.935 1)" text-anchor="middle" style="font-size:13.9px" textLength="14.4" lengthAdjust="spacingAndGlyphs">40</text>
<text transform="translate(601.5 806.0) scale(0.935 1)" text-anchor="middle" style="font-size:13.9px" textLength="14.4" lengthAdjust="spacingAndGlyphs">90</text>
<text transform="translate(601.5 843.0) scale(0.935 1)" text-anchor="middle" style="font-size:13.9px" textLength="28.8" lengthAdjust="spacingAndGlyphs">2700</text>
<text transform="translate(661.5 767.5) scale(0.935 1)" text-anchor="middle" style="font-size:13.9px" textLength="14.4" lengthAdjust="spacingAndGlyphs">50</text>
<text transform="translate(661.5 806.0) scale(0.935 1)" text-anchor="middle" style="font-size:13.9px" textLength="21.6" lengthAdjust="spacingAndGlyphs">100</text>
<text transform="translate(661.5 843.0) scale(0.935 1)" text-anchor="middle" style="font-size:13.9px" textLength="28.8" lengthAdjust="spacingAndGlyphs">3000</text>
<text transform="translate(58.5 880.0) scale(0.935 1)" text-anchor="middle" style="font-size:13.9px" textLength="25.9" lengthAdjust="spacingAndGlyphs">-100</text>
<text transform="translate(133.5 880.0) scale(0.935 1)" text-anchor="middle" style="font-size:13.9px" textLength="18.7" lengthAdjust="spacingAndGlyphs">-50</text>
<text transform="translate(211.5 880.0) scale(0.935 1)" text-anchor="middle" style="font-size:13.9px" textLength="7.2" lengthAdjust="spacingAndGlyphs">0</text>
<text transform="translate(286.5 880.0) scale(0.935 1)" text-anchor="middle" style="font-size:13.9px" textLength="14.4" lengthAdjust="spacingAndGlyphs">50</text>
<text transform="translate(361.5 880.0) scale(0.935 1)" text-anchor="middle" style="font-size:13.9px" textLength="21.6" lengthAdjust="spacingAndGlyphs">100</text>
<text transform="translate(436.5 880.0) scale(0.935 1)" text-anchor="middle" style="font-size:13.9px" textLength="21.6" lengthAdjust="spacingAndGlyphs">150</text>
<text transform="translate(511.5 880.0) scale(0.935 1)" text-anchor="middle" style="font-size:13.9px" textLength="21.6" lengthAdjust="spacingAndGlyphs">200</text>
<text transform="translate(586.5 880.0) scale(0.935 1)" text-anchor="middle" style="font-size:13.9px" textLength="21.6" lengthAdjust="spacingAndGlyphs">250</text>
<text transform="translate(661.5 880.0) scale(0.935 1)" text-anchor="middle" style="font-size:13.9px" textLength="21.6" lengthAdjust="spacingAndGlyphs">300</text>
<text x="275.0" y="781.0" textLength="140.5" lengthAdjust="spacing">Temperature, Dewpoint</text>
<text x="421.7" y="781.0" textLength="25.7" lengthAdjust="spacing">[ °C ]</text>
<text x="307.0" y="818.5" textLength="69.0" lengthAdjust="spacing">Windspeed</text>
<text x="383.8" y="818.5" textLength="29.6" lengthAdjust="spacing">[ knt ]</text>
<text x="293.0" y="856.5" textLength="90.4" lengthAdjust="spacing">CAPE, CINH * 5</text>
<text x="391.1" y="856.5" textLength="38.1" lengthAdjust="spacing">[ J/kg ]</text>
<text x="259.6" y="893.0" textLength="134.0" lengthAdjust="spacing">Storm Relative Helicity</text>
<text x="400.9" y="893.0" textLength="62.3" lengthAdjust="spacing">[ m^2/s^2 ]</text>
</g>
<g shape-rendering="crispEdges"><rect x="67.5" y="607.5" width="43" height="17" fill="#000" stroke="#ff0"/><rect x="67.5" y="636.5" width="57" height="17" fill="#000" stroke="#f07800"/><rect x="625.5" y="691.5" width="30" height="17" fill="#000" stroke="#f0f"/></g>
<g filter="url(#th)">
<text x="71.5" y="621.0" style="fill:#ff0" textLength="35.0" lengthAdjust="spacing">CAPE</text>
<text x="71.5" y="650.0" style="fill:#f07800" textLength="49.5" lengthAdjust="spacing">CINH * 5</text>
<text x="629.0" y="705.0" style="fill:#f0f">LCL</text>
</g>
<text x="218.5" y="710.5" text-anchor="middle" style="font-size:8px;fill:#ffffe0">1</text>
<text x="298.5" y="685.5" text-anchor="middle" style="font-size:8px;fill:#ffffe0">2</text>
<text x="282.5" y="657.5" text-anchor="middle" style="font-size:8px;fill:#ffffe0">3</text>
<g shape-rendering="crispEdges" fill="none" stroke-width="1">
<path stroke="#0f0" d="M761.5,40V770"/><path stroke="#ff0080" d="M826.5,40V770"/>
<path stroke="#fff" d="M761.5,62.3l-9.4,27.2M761.5,80.4l-2.0,28.7M761.5,92.6l-3.0,28.6M761.5,126.5l-17.0,23.3M761.5,140.5l-17.6,22.8M761.5,200.3l-13.1,25.7M761.5,218.2l-12.6,25.9M761.5,268.6l-9.8,27.1M761.5,274.2l-12.1,26.2M761.5,300.4l-16.9,23.3M761.5,321.6l-8.5,27.5M761.5,322.7l-8.6,27.5M761.5,340.4l-18.5,22.1M761.5,357.1l-20.4,20.4M761.5,366.2l-20.8,20.0M761.5,368.0l-21.6,19.1M761.5,379.0l-22.1,18.4M761.5,391.0l-19.8,20.9M761.5,394.0l-19.8,20.9M761.5,419.4l-18.8,21.8M761.5,428.6l-18.0,22.4M761.5,430.4l-18.6,22.0M761.5,440.5l-19.3,21.4M761.5,445.5l-18.1,22.4M761.5,449.3l-18.8,21.8M761.5,502.6l-19.4,21.3M761.5,513.3l-18.8,21.9M761.5,529.3l-25.4,13.6M761.5,533.3l-25.1,14.1M761.5,553.4l-21.3,19.4M761.5,568.2l-23.1,17.2M761.5,569.4l-23.0,17.3M761.5,583.4l-20.7,20.1M761.5,584.9l-21.6,19.0M761.5,585.9l-20.8,19.9M761.5,587.2l-21.2,19.5M761.5,595.0l-21.2,19.5M761.5,599.7l-19.2,21.5M761.5,600.2l-18.6,22.0M761.5,601.3l-17.6,22.8M761.5,604.6l-15.8,24.1M761.5,607.6l-17.7,22.7M761.5,615.6l-14.8,24.7M761.5,616.1l-14.8,24.7M761.5,619.8l-17.5,22.9M761.5,620.6l-18.3,22.2M761.5,623.2l-19.1,21.6M761.5,643.6l-16.4,23.6M761.5,665.5l-12.6,25.9M761.5,684.4l-14.9,24.6M761.5,689.0l-13.5,25.4M761.5,697.0l-13.9,25.2M761.5,700.4l-16.7,23.5M761.5,701.1l-16.8,23.4M761.5,706.3l-22.7,17.7M761.5,706.6l-22.7,17.7M761.5,707.2l-22.7,17.7M761.5,725.2l-23.3,-16.9M761.5,731.2l-2.0,-28.7M761.5,731.2l14.4,-24.9M826.5,62.3l19.5,21.2M826.5,80.4l19.3,21.4M826.5,92.6l18.0,22.5M826.5,126.5l11.7,26.3M826.5,140.5l-4.4,28.5M826.5,200.3l-4.1,28.5M826.5,218.2l-1.6,28.8M826.5,268.6l3.6,28.6M826.5,274.2l1.4,28.8M826.5,300.4l-9.5,27.2M826.5,321.6l4.8,28.4M826.5,322.7l5.2,28.3M826.5,340.4l-11.7,26.3M826.5,357.1l-14.7,24.7M826.5,366.2l-14.4,24.9M826.5,368.0l-16.6,23.5M826.5,379.0l-19.3,21.4M826.5,391.0l-15.7,24.1M826.5,394.0l-15.6,24.2M826.5,419.4l-13.5,25.5M826.5,428.6l-11.9,26.2M826.5,430.4l-12.5,26.0M826.5,440.5l-12.7,25.8M826.5,445.5l-9.9,27.1M826.5,449.3l-10.5,26.8M826.5,502.6l-10.9,26.7M826.5,513.3l-8.3,27.6M826.5,529.3l-25.4,13.6M826.5,533.3l-24.7,14.8M826.5,553.4l-13.9,25.2M826.5,568.2l-15.8,24.0M826.5,569.4l-14.5,24.9M826.5,583.4l-12.4,26.0M826.5,584.9l-15.4,24.3M826.5,585.9l-13.3,25.5M826.5,587.2l-14.2,25.1M826.5,595.0l-10.9,26.7M826.5,599.7l-0.9,28.8M826.5,600.2l2.3,28.7M826.5,601.3l8.6,27.5M826.5,604.6l17.3,23.0M826.5,607.6l16.0,24.0M826.5,615.6l18.0,22.5M826.5,616.1l21.7,18.9M826.5,619.8l26.6,11.0M826.5,620.6l25.4,13.6M826.5,623.2l23.5,16.6M826.5,643.6l10.3,26.9M826.5,665.5l4.5,28.4M826.5,684.4l2.7,28.7M826.5,689.0l7.0,27.9M826.5,697.0l16.8,23.4M826.5,700.4l16.7,23.4M826.5,701.1l21.3,19.4M826.5,706.3l27.9,-7.0M826.5,706.6l27.3,-9.2M826.5,707.2l27.0,-10.0M826.5,725.2l22.3,-18.3M826.5,731.2l23.4,-16.7M826.5,731.2l24.7,-14.8"/>
</g>
<text x="761.5" y="32.0" text-anchor="middle" font-weight="bold" style="fill:#0f0">OBS</text>
<text x="826.5" y="32.0" text-anchor="middle" font-weight="bold" style="fill:#ff0080">SR</text>
<text transform="translate(894.0 39.5) scale(0.935 1)" style="font-size:13.9px" textLength="63.9" lengthAdjust="spacing" text-decoration="underline">Parameter</text>
<text transform="translate(1124.0 39.5) scale(0.935 1)" text-anchor="end" style="font-size:13.9px" text-decoration="underline">Value LCL</text>
<text transform="translate(1214.0 39.5) scale(0.935 1)" text-anchor="end" style="font-size:13.9px" text-decoration="underline">Value CCL</text>
<text transform="translate(1230.0 39.5) scale(0.935 1)" style="font-size:13.9px" text-decoration="underline">Unit</text>
<text transform="translate(894.0 61.5) scale(0.935 1)" style="font-size:13.9px" textLength="150.3" lengthAdjust="spacing">Convective Temperature:</text>
<text transform="translate(1124.0 61.5) scale(0.935 1)" text-anchor="end" style="font-size:13.9px;fill:#f00">29.70</text>
<text transform="translate(1230.0 61.5) scale(0.935 1)" style="font-size:13.9px">[°C]</text>
<text transform="translate(894.0 78.5) scale(0.935 1)" style="font-size:13.9px" textLength="98.2" lengthAdjust="spacing">Snowfall Height:</text>
<text transform="translate(1124.0 78.5) scale(0.935 1)" text-anchor="end" style="font-size:13.9px">3504.99</text>
<text transform="translate(1230.0 78.5) scale(0.935 1)" style="font-size:13.9px" textLength="19.8" lengthAdjust="spacing">[m]</text>
<text transform="translate(894.0 103.5) scale(0.935 1)" style="font-size:13.9px" textLength="276.6" lengthAdjust="spacing" text-decoration="underline">Parcels: Using 50mB mean layer LCL + CCL</text>
<text transform="translate(894.0 123.5) scale(0.935 1)" style="font-size:13.9px" textLength="73.4" lengthAdjust="spacing">Lifted Index:</text>
<text transform="translate(1124.0 123.5) scale(0.935 1)" text-anchor="end" style="font-size:13.9px;fill:#f00">-3.34</text>
<text transform="translate(1214.0 123.5) scale(0.935 1)" text-anchor="end" style="font-size:13.9px;fill:#f00">-5.51</text>
<text transform="translate(1230.0 123.5) scale(0.935 1)" style="font-size:13.9px">[°C]</text>
<text transform="translate(894.0 140.5) scale(0.935 1)" style="font-size:13.9px" textLength="65.4" lengthAdjust="spacing">CAPE ML:</text>
<text transform="translate(1124.0 140.5) scale(0.935 1)" text-anchor="end" style="font-size:13.9px;fill:#f00">1283.02</text>
<text transform="translate(1214.0 140.5) scale(0.935 1)" text-anchor="end" style="font-size:13.9px;fill:#f00">2153.36</text>
<text transform="translate(1230.0 140.5) scale(0.935 1)" style="font-size:13.9px" textLength="33.5" lengthAdjust="spacing">[J/kg]</text>
<text transform="translate(894.0 157.5) scale(0.935 1)" style="font-size:13.9px" textLength="185.7" lengthAdjust="spacing">CINH | LSI (Inversion: 809mB):</text>
<text transform="translate(1124.0 157.5) scale(0.935 1)" text-anchor="end" style="font-size:13.9px;fill:#f00">61.13</text>
<text transform="translate(1124.0 157.5) scale(0.935 1)" style="font-size:13.9px">,</text>
<text transform="translate(1136.0 157.5) scale(0.935 1)" style="font-size:13.9px;fill:#f00">0.30</text>
<text transform="translate(1230.0 157.5) scale(0.935 1)" style="font-size:13.9px" textLength="65.5" lengthAdjust="spacing">[J/kg], [°C]</text>
<text transform="translate(894.0 174.5) scale(0.935 1)" style="font-size:13.9px" textLength="73.4" lengthAdjust="spacing">CAPE SFC:</text>
<text transform="translate(1124.0 174.5) scale(0.935 1)" text-anchor="end" style="font-size:13.9px;fill:#ff0">1422.03</text>
<text transform="translate(1214.0 174.5) scale(0.935 1)" text-anchor="end" style="font-size:13.9px;fill:#f00">2049.16</text>
<text transform="translate(1230.0 174.5) scale(0.935 1)" style="font-size:13.9px" textLength="33.5" lengthAdjust="spacing">[J/kg]</text>
<text transform="translate(894.0 191.5) scale(0.935 1)" style="font-size:13.9px" textLength="137.0" lengthAdjust="spacing">CAPE MU | CINH MU:</text>
<text transform="translate(1124.0 191.5) scale(0.935 1)" text-anchor="end" style="font-size:13.9px;fill:#ff0">1422.03</text>
<text transform="translate(1124.0 191.5) scale(0.935 1)" style="font-size:13.9px">,</text>
<text transform="translate(1136.0 191.5) scale(0.935 1)" style="font-size:13.9px;fill:#f00">40.46</text>
<text transform="translate(1230.0 191.5) scale(0.935 1)" style="font-size:13.9px" textLength="33.5" lengthAdjust="spacing">[J/kg]</text>
<text transform="translate(894.0 208.5) scale(0.935 1)" style="font-size:13.9px" textLength="170.1" lengthAdjust="spacing">3km SFC CAPE | IL CAPE:</text>
<text transform="translate(1124.0 208.5) scale(0.935 1)" text-anchor="end" style="font-size:13.9px;fill:#ff0">28.68</text>
<text transform="translate(1124.0 208.5) scale(0.935 1)" style="font-size:13.9px">,</text>
<text transform="translate(1136.0 208.5) scale(0.935 1)" style="font-size:13.9px;fill:#f00">1401.98</text>
<text transform="translate(1230.0 208.5) scale(0.935 1)" style="font-size:13.9px" textLength="33.5" lengthAdjust="spacing">[J/kg]</text>
<text transform="translate(894.0 225.5) scale(0.935 1)" style="font-size:13.9px" textLength="150.7" lengthAdjust="spacing">DCAPE (LFS = 582mB):</text>
<text transform="translate(1124.0 225.5) scale(0.935 1)" text-anchor="end" style="font-size:13.9px;fill:#f00">559.92</text>
<text transform="translate(1230.0 225.5) scale(0.935 1)" style="font-size:13.9px" textLength="33.5" lengthAdjust="spacing">[J/kg]</text>
<text transform="translate(894.0 242.5) scale(0.935 1)" style="font-size:13.9px" textLength="127.1" lengthAdjust="spacing">850-600 Lapse Rate:</text>
<text transform="translate(1124.0 242.5) scale(0.935 1)" text-anchor="end" style="font-size:13.9px;fill:#f00">21.13</text>
<text transform="translate(1230.0 242.5) scale(0.935 1)" style="font-size:13.9px">[°C]</text>
<text transform="translate(894.0 259.5) scale(0.935 1)" style="font-size:13.9px" textLength="165.9" lengthAdjust="spacing">FM Hail Size | SHIP | LHP:</text>
<text transform="translate(1124.0 259.5) scale(0.935 1)" text-anchor="end" style="font-size:13.9px;fill:#f00">2.5 - 3.8</text>
<text transform="translate(1124.0 259.5) scale(0.935 1)" style="font-size:13.9px">,</text>
<text transform="translate(1136.0 259.5) scale(0.935 1)" style="font-size:13.9px;fill:#0f0">0.88</text>
<text transform="translate(1161.3 259.5) scale(0.935 1)" style="font-size:13.9px">,</text>
<text transform="translate(1171.5 259.5) scale(0.935 1)" style="font-size:13.9px;fill:#0f0">2.84</text>
<text transform="translate(1230.0 259.5) scale(0.935 1)" style="font-size:13.9px" textLength="76.0" lengthAdjust="spacing">[cm], [1], [1]</text>
<text transform="translate(894.0 276.5) scale(0.935 1)" style="font-size:13.9px" textLength="156.0" lengthAdjust="spacing">Estofex Exp. Hail Param:</text>
<text transform="translate(1124.0 276.5) scale(0.935 1)" text-anchor="end" style="font-size:13.9px;fill:#f00">5.11</text>
<text transform="translate(1230.0 276.5) scale(0.935 1)" style="font-size:13.9px" textLength="27.1" lengthAdjust="spacing">[cm]</text>
<text transform="translate(894.0 293.5) scale(0.935 1)" style="font-size:13.9px" textLength="184.2" lengthAdjust="spacing">Max. Hail Size (OLD, MU, IL):</text>
<text transform="translate(1124.0 293.5) scale(0.935 1)" text-anchor="end" style="font-size:13.9px;fill:#f00">5.71</text>
<text transform="translate(1124.0 293.5) scale(0.935 1)" style="font-size:13.9px">,</text>
<text transform="translate(1136.0 293.5) scale(0.935 1)" style="font-size:13.9px;fill:#f00">3.30</text>
<text transform="translate(1161.3 293.5) scale(0.935 1)" style="font-size:13.9px">,</text>
<text transform="translate(1171.5 293.5) scale(0.935 1)" style="font-size:13.9px;fill:#f00">3.75</text>
<text transform="translate(1230.0 293.5) scale(0.935 1)" style="font-size:13.9px" textLength="27.1" lengthAdjust="spacing">[cm]</text>
<text transform="translate(894.0 313.5) scale(0.935 1)" style="font-size:13.9px" textLength="108.1" lengthAdjust="spacing">LCL / CCL (AGL):</text>
<text transform="translate(1124.0 313.5) scale(0.935 1)" text-anchor="end" style="font-size:13.9px;fill:#ff0">1297.78</text>
<text transform="translate(1214.0 313.5) scale(0.935 1)" text-anchor="end" style="font-size:13.9px;fill:#ff0">1839.16</text>
<text transform="translate(1230.0 313.5) scale(0.935 1)" style="font-size:13.9px" textLength="19.8" lengthAdjust="spacing">[m]</text>
<text transform="translate(894.0 330.5) scale(0.935 1)" style="font-size:13.9px" textLength="112.2" lengthAdjust="spacing">Convective Height:</text>
<text transform="translate(1124.0 330.5) scale(0.935 1)" text-anchor="end" style="font-size:13.9px;fill:#f00">9.65</text>
<text transform="translate(1214.0 330.5) scale(0.935 1)" text-anchor="end" style="font-size:13.9px;fill:#f00">9.36</text>
<text transform="translate(1230.0 330.5) scale(0.935 1)" style="font-size:13.9px" textLength="27.1" lengthAdjust="spacing">[km]</text>
<text transform="translate(894.0 355.5) scale(0.935 1)" style="font-size:13.9px" textLength="112.6" lengthAdjust="spacing" text-decoration="underline">Convective Indices</text>
<text transform="translate(894.0 375.5) scale(0.935 1)" style="font-size:13.9px" textLength="102.0" lengthAdjust="spacing">Showalter Index:</text>
<text transform="translate(1124.0 375.5) scale(0.935 1)" text-anchor="end" style="font-size:13.9px;fill:#f00">-2.93</text>
<text transform="translate(1230.0 375.5) scale(0.935 1)" style="font-size:13.9px">[°C]</text>
<text transform="translate(894.0 392.5) scale(0.935 1)" style="font-size:13.9px" textLength="160.6" lengthAdjust="spacing">Modified Thompson Index:</text>
<text transform="translate(1124.0 392.5) scale(0.935 1)" text-anchor="end" style="font-size:13.9px;fill:#f00">45.00</text>
<text transform="translate(1230.0 392.5) scale(0.935 1)" style="font-size:13.9px">[°C]</text>
<text transform="translate(894.0 409.5) scale(0.935 1)" style="font-size:13.9px" textLength="112.2" lengthAdjust="spacing">Total Totals Index:</text>
<text transform="translate(1124.0 409.5) scale(0.935 1)" text-anchor="end" style="font-size:13.9px;fill:#f00">52.20</text>
<text transform="translate(1230.0 409.5) scale(0.935 1)" style="font-size:13.9px">[°C]</text>
<text transform="translate(894.0 426.5) scale(0.935 1)" style="font-size:13.9px" textLength="60.9" lengthAdjust="spacing">KO Index:</text>
<text transform="translate(1124.0 426.5) scale(0.935 1)" text-anchor="end" style="font-size:13.9px;fill:#f00">-20.36</text>
<text transform="translate(1230.0 426.5) scale(0.935 1)" style="font-size:13.9px">[1]</text>
<text transform="translate(894.0 443.5) scale(0.935 1)" style="font-size:13.9px" textLength="131.3" lengthAdjust="spacing">Craven SigSvr / 1000:</text>
<text transform="translate(1124.0 443.5) scale(0.935 1)" text-anchor="end" style="font-size:13.9px;fill:#f00">21.88</text>
<text transform="translate(1230.0 443.5) scale(0.935 1)" style="font-size:13.9px" textLength="57.1" lengthAdjust="spacing">[m^3/s^3]</text>
<text transform="translate(894.0 460.5) scale(0.935 1)" style="font-size:13.9px" textLength="121.8" lengthAdjust="spacing">SCP RM (new, old):</text>
<text transform="translate(1124.0 460.5) scale(0.935 1)" text-anchor="end" style="font-size:13.9px;fill:#ff0">0.73</text>
<text transform="translate(1124.0 460.5) scale(0.935 1)" style="font-size:13.9px">,</text>
<text transform="translate(1136.0 460.5) scale(0.935 1)" style="font-size:13.9px;fill:#ff0">0.99</text>
<text transform="translate(1230.0 460.5) scale(0.935 1)" style="font-size:13.9px">[1]</text>
<text transform="translate(894.0 477.5) scale(0.935 1)" style="font-size:13.9px" textLength="94.4" lengthAdjust="spacing">STP (new, old):</text>
<text transform="translate(1124.0 477.5) scale(0.935 1)" text-anchor="end" style="font-size:13.9px;fill:#f00">0.15</text>
<text transform="translate(1124.0 477.5) scale(0.935 1)" style="font-size:13.9px">,</text>
<text transform="translate(1136.0 477.5) scale(0.935 1)" style="font-size:13.9px;fill:#0f0">0.02</text>
<text transform="translate(1230.0 477.5) scale(0.935 1)" style="font-size:13.9px">[1]</text>
<text transform="translate(894.0 494.5) scale(0.935 1)" style="font-size:13.9px" textLength="144.6" lengthAdjust="spacing">SB STP (fix) | CWASP:</text>
<text transform="translate(1124.0 494.5) scale(0.935 1)" text-anchor="end" style="font-size:13.9px;fill:#0f0">0.02</text>
<text transform="translate(1124.0 494.5) scale(0.935 1)" style="font-size:13.9px">,</text>
<text transform="translate(1136.0 494.5) scale(0.935 1)" style="font-size:13.9px;fill:#ff0">62.63</text>
<text transform="translate(1230.0 494.5) scale(0.935 1)" style="font-size:13.9px" textLength="45.2" lengthAdjust="spacing">[1], [%]</text>
<text transform="translate(894.0 511.5) scale(0.935 1)" style="font-size:13.9px" textLength="119.9" lengthAdjust="spacing">DCP | MMP | MSP:</text>
<text transform="translate(1124.0 511.5) scale(0.935 1)" text-anchor="end" style="font-size:13.9px;fill:#f00">0.87</text>
<text transform="translate(1124.0 511.5) scale(0.935 1)" style="font-size:13.9px">,</text>
<text transform="translate(1136.0 511.5) scale(0.935 1)" style="font-size:13.9px;fill:#f00">78.39</text>
<text transform="translate(1168.5 511.5) scale(0.935 1)" style="font-size:13.9px">,</text>
<text transform="translate(1178.8 511.5) scale(0.935 1)" style="font-size:13.9px;fill:#0f0">48.88</text>
<text transform="translate(1230.0 511.5) scale(0.935 1)" style="font-size:13.9px" textLength="75.7" lengthAdjust="spacing">[1], [%], [%]</text>
<text transform="translate(894.0 528.5) scale(0.935 1)" style="font-size:13.9px" textLength="135.1" lengthAdjust="spacing">MB Comp | SHERBE:</text>
<text transform="translate(1124.0 528.5) scale(0.935 1)" text-anchor="end" style="font-size:13.9px;fill:#0f0">0.00</text>
<text transform="translate(1124.0 528.5) scale(0.935 1)" style="font-size:13.9px">,</text>
<text transform="translate(1136.0 528.5) scale(0.935 1)" style="font-size:13.9px;fill:#0f0">0.48</text>
<text transform="translate(1230.0 528.5) scale(0.935 1)" style="font-size:13.9px" textLength="40.0" lengthAdjust="spacing">[1], [1]</text>
<text transform="translate(894.0 545.5) scale(0.935 1)" style="font-size:13.9px" textLength="154.9" lengthAdjust="spacing">Exp. Supercell Index CH:</text>
<text transform="translate(1124.0 545.5) scale(0.935 1)" text-anchor="end" style="font-size:13.9px;fill:#f00">4.23</text>
<text transform="translate(1230.0 545.5) scale(0.935 1)" style="font-size:13.9px">[1]</text>
<text transform="translate(894.0 562.5) scale(0.935 1)" style="font-size:13.9px" textLength="105.8" lengthAdjust="spacing">SWISS 12 Index:</text>
<text transform="translate(1124.0 562.5) scale(0.935 1)" text-anchor="end" style="font-size:13.9px;fill:#f00">-12.07</text>
<text transform="translate(1230.0 562.5) scale(0.935 1)" style="font-size:13.9px">[1]</text>
<text transform="translate(894.0 579.5) scale(0.935 1)" style="font-size:13.9px" textLength="117.9" lengthAdjust="spacing">Precipitable Water:</text>
<text transform="translate(1124.0 579.5) scale(0.935 1)" text-anchor="end" style="font-size:13.9px;fill:#ff0">29.54</text>
<text transform="translate(1230.0 579.5) scale(0.935 1)" style="font-size:13.9px" textLength="31.2" lengthAdjust="spacing">[mm]</text>
<text transform="translate(894.0 604.5) scale(0.935 1)" style="font-size:13.9px" textLength="107.3" lengthAdjust="spacing" text-decoration="underline">Wind Parameters</text>
<text transform="translate(894.0 624.5) scale(0.935 1)" style="font-size:13.9px" textLength="152.6" lengthAdjust="spacing">Storm Direction | Motion:</text>
<text transform="translate(1124.0 624.5) scale(0.935 1)" text-anchor="end" style="font-size:13.9px">241.82</text>
<text transform="translate(1124.0 624.5) scale(0.935 1)" style="font-size:13.9px">,</text>
<text transform="translate(1136.0 624.5) scale(0.935 1)" style="font-size:13.9px;fill:#ff0">20.01</text>
<text transform="translate(1230.0 624.5) scale(0.935 1)" style="font-size:13.9px" textLength="49.1" lengthAdjust="spacing">[°], [knt]</text>
<text transform="translate(894.0 641.5) scale(0.935 1)" style="font-size:13.9px" textLength="124.4" lengthAdjust="spacing">500m Critical Angle:</text>
<text transform="translate(1124.0 641.5) scale(0.935 1)" text-anchor="end" style="font-size:13.9px;fill:#0f0">351.30</text>
<text transform="translate(1230.0 641.5) scale(0.935 1)" style="font-size:13.9px">[°]</text>
<text transform="translate(894.0 661.5) scale(0.935 1)" style="font-size:13.9px" textLength="114.5" lengthAdjust="spacing">SR Wind Sfc-2km:</text>
<text transform="translate(1124.0 661.5) scale(0.935 1)" text-anchor="end" style="font-size:13.9px;fill:#ff0">10.04</text>
<text transform="translate(1230.0 661.5) scale(0.935 1)" style="font-size:13.9px" textLength="27.1" lengthAdjust="spacing">[knt]</text>
<text transform="translate(894.0 678.5) scale(0.935 1)" style="font-size:13.9px" textLength="120.6" lengthAdjust="spacing">SR Wind 4km-6km:</text>
<text transform="translate(1124.0 678.5) scale(0.935 1)" text-anchor="end" style="font-size:13.9px;fill:#0f0">9.03</text>
<text transform="translate(1230.0 678.5) scale(0.935 1)" style="font-size:13.9px" textLength="27.1" lengthAdjust="spacing">[knt]</text>
<text transform="translate(894.0 695.5) scale(0.935 1)" style="font-size:13.9px" textLength="128.2" lengthAdjust="spacing">SR Wind 9km-11km:</text>
<text transform="translate(1124.0 695.5) scale(0.935 1)" text-anchor="end" style="font-size:13.9px;fill:#f00">28.94</text>
<text transform="translate(1230.0 695.5) scale(0.935 1)" style="font-size:13.9px" textLength="50.6" lengthAdjust="spacing">[knt] HP</text>
<text transform="translate(894.0 715.5) scale(0.935 1)" style="font-size:13.9px" textLength="129.4" lengthAdjust="spacing">Effective Shear 6000:</text>
<text transform="translate(1124.0 715.5) scale(0.935 1)" text-anchor="end" style="font-size:13.9px;fill:#ff0">33.16</text>
<text transform="translate(1230.0 715.5) scale(0.935 1)" style="font-size:13.9px" textLength="27.1" lengthAdjust="spacing">[knt]</text>
<text transform="translate(894.0 735.5) scale(0.935 1)" style="font-size:13.9px" textLength="157.5" lengthAdjust="spacing">Bulk Richardson Number:</text>
<text transform="translate(1124.0 735.5) scale(0.935 1)" text-anchor="end" style="font-size:13.9px;fill:#f00">21.93</text>
<text transform="translate(1214.0 735.5) scale(0.935 1)" text-anchor="end" style="font-size:13.9px;fill:#f00">36.80</text>
<text transform="translate(1230.0 735.5) scale(0.935 1)" style="font-size:13.9px">[1]</text>
<text transform="translate(894.0 755.5) scale(0.935 1)" style="font-size:13.9px" textLength="118.7" lengthAdjust="spacing">3km Effective SRH:</text>
<text transform="translate(1124.0 755.5) scale(0.935 1)" text-anchor="end" style="font-size:13.9px;fill:#0f0">47.60</text>
<text transform="translate(1230.0 755.5) scale(0.935 1)" style="font-size:13.9px" textLength="57.1" lengthAdjust="spacing">[m^2/s^2]</text>
<text transform="translate(894.0 772.5) scale(0.935 1)" style="font-size:13.9px" textLength="185.3" lengthAdjust="spacing">Max 3km SRH (0-2km) | AGL:</text>
<text transform="translate(1124.0 772.5) scale(0.935 1)" text-anchor="end" style="font-size:13.9px;fill:#f00">125.36</text>
<text transform="translate(1124.0 772.5) scale(0.935 1)" style="font-size:13.9px">,</text>
<text transform="translate(1136.0 772.5) scale(0.935 1)" style="font-size:13.9px;fill:#0f0">2000.00</text>
<text transform="translate(1230.0 772.5) scale(0.935 1)" style="font-size:13.9px" textLength="86.0" lengthAdjust="spacing">[m^2/s^2], [m]</text>
<text transform="translate(894.0 792.5) scale(0.935 1)" style="font-size:13.9px" textLength="165.9" lengthAdjust="spacing">3km Energy Helicity Index:</text>
<text transform="translate(1124.0 792.5) scale(0.935 1)" text-anchor="end" style="font-size:13.9px;fill:#0f0">0.38</text>
<text transform="translate(1214.0 792.5) scale(0.935 1)" text-anchor="end" style="font-size:13.9px;fill:#0f0">0.64</text>
<text transform="translate(1230.0 792.5) scale(0.935 1)" style="font-size:13.9px">[1]</text>
<text transform="translate(894.0 809.5) scale(0.935 1)" style="font-size:13.9px" textLength="149.9" lengthAdjust="spacing">3km Vorticity Gen. Pot.:</text>
<text transform="translate(1124.0 809.5) scale(0.935 1)" text-anchor="end" style="font-size:13.9px;fill:#f00">0.20</text>
<text transform="translate(1214.0 809.5) scale(0.935 1)" text-anchor="end" style="font-size:13.9px;fill:#f00">0.25</text>
<text transform="translate(1230.0 809.5) scale(0.935 1)" style="font-size:13.9px" textLength="44.2" lengthAdjust="spacing">[m/s^2]</text>
<rect x="729" y="827" width="15" height="8" fill="#f00"/>
<text transform="translate(752.7 836.0) scale(0.935 1)" style="font-size:13.9px;fill:#f00">Temperature Profile</text>
<rect x="729" y="847" width="15" height="8" fill="#0ff"/>
<text transform="translate(752.7 856.0) scale(0.935 1)" style="font-size:13.9px;fill:#0ff">Dewpoint Profile</text>
<rect x="729" y="867" width="15" height="8" fill="#0f0"/>
<text transform="translate(752.7 876.0) scale(0.935 1)" style="font-size:13.9px;fill:#0f0">OBS Windspeed Profile</text>
<rect x="729" y="887" width="15" height="8" fill="#ff0080"/>
<text transform="translate(752.7 896.0) scale(0.935 1)" style="font-size:13.9px;fill:#ff0080">SR Windspeed Profile</text>
<rect x="729" y="907" width="15" height="8" fill="#c8c800"/>
<text transform="translate(752.7 916.0) scale(0.935 1)" style="font-size:13.9px;fill:#c8c800">Sfc-3km Storm Relative Helicity Profile</text>
<rect x="729" y="927" width="15" height="8" fill="#404000"/>
<text transform="translate(752.7 936.0) scale(0.935 1)" style="font-size:13.9px;fill:#404000">Effective Layer (CAPE &gt;= 100 J/kg)</text>
<rect x="1079" y="827" width="15" height="8" fill="#0f0"/>
<text transform="translate(1103.2 836.0) scale(0.935 1)" style="font-size:13.9px;fill:#0f0">No / Non Severe Thunderstorms</text>
<rect x="1079" y="847" width="15" height="8" fill="#ff0"/>
<text transform="translate(1103.2 856.0) scale(0.935 1)" style="font-size:13.9px;fill:#ff0">Scattered / Moderate Thunderstorms</text>
<rect x="1079" y="867" width="15" height="8" fill="#f00"/>
<text transform="translate(1103.2 876.0) scale(0.935 1)" style="font-size:13.9px;fill:#f00">Widespread / Severe Thunderstorms</text>
</svg></body></html>
